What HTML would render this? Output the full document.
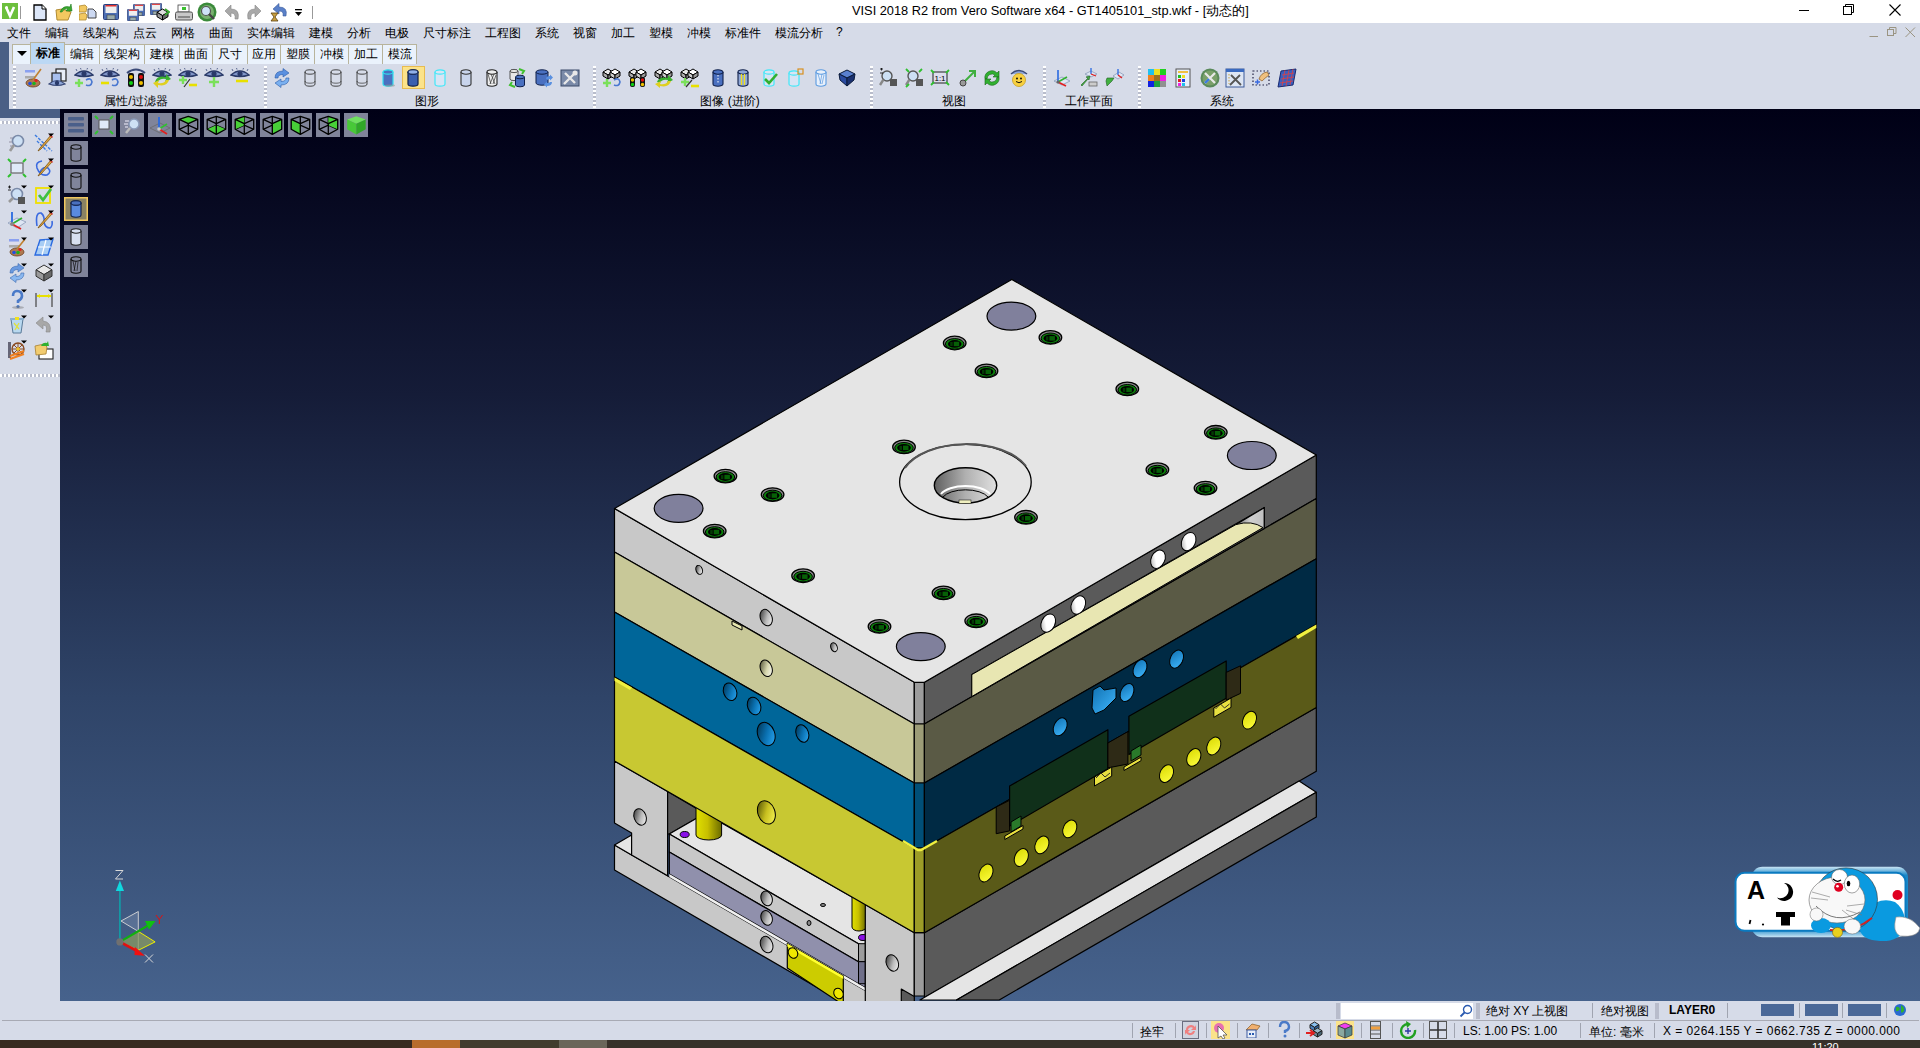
<!DOCTYPE html>
<html><head><meta charset="utf-8">
<style>
*{box-sizing:border-box}
html,body{margin:0;padding:0}
body{width:1920px;height:1048px;overflow:hidden;position:relative;background:#d6dbe8;font-family:"Liberation Sans",sans-serif;color:#000}
.a{position:absolute}
#title{left:0;top:0;width:1920px;height:23px;background:#fff}
#ttext{left:852px;top:3px;font-size:12.8px;white-space:nowrap;color:#000}
#menu{left:0;top:23px;width:1920px;height:19px}
#menu span{position:absolute;top:2px;font-size:12px;white-space:nowrap}
.tab{position:absolute;top:43px;height:21px;border:1px solid #b8b49c;border-bottom:none;background:#e6eaf2;font-size:12px;text-align:center;line-height:19px}
.glbl{position:absolute;top:93px;font-size:12px;white-space:nowrap;transform:translateX(-50%)}
.sep{position:absolute;top:66px;width:3px;height:42px;background-image:linear-gradient(#fff 50%,#b8bccb 50%);background-size:3px 4px}
#mdi1{left:0;top:42px;width:9px;height:67px;background:#4a5f85}
#mdi2{left:0;top:109px;width:60px;height:9px;background:#4a5f85}
#vp{left:60px;top:109px;width:1860px;height:892px;background:linear-gradient(#000016 0%,#151c38 32%,#2f4468 66%,#46628c 100%)}
#status{left:0;top:1001px;width:1920px;height:39px;background:#d6dbe8}
#taskbar{left:0;top:1040px;width:1920px;height:8px;background:#2b251e}
.st{position:absolute;font-size:12px;white-space:nowrap}
.vsep{position:absolute;width:1px;background:#a0a4b0}
</style></head><body>
<div id="title" class="a"></div>
<div id="ttext" class="a">VISI 2018 R2 from Vero Software x64 - GT1405101_stp.wkf - [动态的]</div>

<div id="menu" class="a">
<span style="left:7px">文件</span><span style="left:45px">编辑</span><span style="left:83px">线架构</span><span style="left:133px">点云</span><span style="left:171px">网格</span><span style="left:209px">曲面</span><span style="left:247px">实体编辑</span><span style="left:309px">建模</span><span style="left:347px">分析</span><span style="left:385px">电极</span><span style="left:423px">尺寸标注</span><span style="left:485px">工程图</span><span style="left:535px">系统</span><span style="left:573px">视窗</span><span style="left:611px">加工</span><span style="left:649px">塑模</span><span style="left:687px">冲模</span><span style="left:725px">标准件</span><span style="left:775px">模流分析</span><span style="left:836px">?</span>
</div>

<div class="tab" style="left:12px;width:19px;top:44px;height:20px;background:#eaf2fc"><span style="display:inline-block;width:0;height:0;border-left:5px solid transparent;border-right:5px solid transparent;border-top:5px solid #000;vertical-align:middle;margin-top:-2px"></span></div><div class="tab" style="left:30px;width:35px;top:42px;height:22px;background:#bcd8f4;font-weight:bold;line-height:20px">标准</div><div class="tab" style="left:64px;width:36px;top:44px;height:20px;background:#eaf2fc">编辑</div><div class="tab" style="left:99px;width:46px;top:44px;height:20px;background:#eaf2fc">线架构</div><div class="tab" style="left:144px;width:36px;top:44px;height:20px;background:#eaf2fc">建模</div><div class="tab" style="left:179px;width:34px;top:44px;height:20px;background:#eaf2fc">曲面</div><div class="tab" style="left:212px;width:36px;top:44px;height:20px;background:#eaf2fc">尺寸</div><div class="tab" style="left:247px;width:34px;top:44px;height:20px;background:#eaf2fc">应用</div><div class="tab" style="left:280px;width:35px;top:44px;height:20px;background:#eaf2fc">塑膜</div><div class="tab" style="left:314px;width:35px;top:44px;height:20px;background:#eaf2fc">冲模</div><div class="tab" style="left:348px;width:35px;top:44px;height:20px;background:#eaf2fc">加工</div><div class="tab" style="left:382px;width:35px;top:44px;height:20px;background:#eaf2fc">模流</div>
<div class="sep" style="left:13px"></div><div class="sep" style="left:264px"></div><div class="sep" style="left:593px"></div><div class="sep" style="left:870px"></div><div class="sep" style="left:1043px"></div><div class="sep" style="left:1138px"></div>
<div class="glbl" style="left:136px">属性/过滤器</div><div class="glbl" style="left:427px">图形</div><div class="glbl" style="left:730px">图像 (进阶)</div><div class="glbl" style="left:954px">视图</div><div class="glbl" style="left:1089px">工作平面</div><div class="glbl" style="left:1222px">系统</div>
<div id="mdi1" class="a"></div>
<div id="mdi2" class="a"></div>
<div id="vp" class="a"></div>
<!--MOLD--><svg class="a" style="left:0;top:0" width="1920" height="1048" viewBox="0 0 1920 1048">
<defs>
<clipPath id="vpc"><rect x="60" y="109" width="1860" height="892"/></clipPath>
<linearGradient id="hole" x1="0" y1="0" x2="1" y2="1"><stop offset="0" stop-color="#222"/><stop offset="0.55" stop-color="#bbb"/><stop offset="1" stop-color="#fff"/></linearGradient>
<linearGradient id="holew" x1="1" y1="0" x2="0" y2="1"><stop offset="0" stop-color="#fff"/><stop offset="0.6" stop-color="#fff"/><stop offset="1" stop-color="#999"/></linearGradient>
<linearGradient id="holey" x1="0" y1="0" x2="1" y2="1"><stop offset="0" stop-color="#3a3a00"/><stop offset="0.5" stop-color="#c8c020"/><stop offset="1" stop-color="#ffff60"/></linearGradient>
<linearGradient id="holeb" x1="0" y1="0" x2="1" y2="1"><stop offset="0" stop-color="#002a44"/><stop offset="0.5" stop-color="#0a70b0"/><stop offset="1" stop-color="#30b0ff"/></linearGradient>
<linearGradient id="holet" x1="0" y1="0" x2="1" y2="1"><stop offset="0" stop-color="#3a3a20"/><stop offset="0.55" stop-color="#d8d8b0"/><stop offset="1" stop-color="#fff"/></linearGradient>
<linearGradient id="byb" x1="0" y1="0" x2="1" y2="1"><stop offset="0" stop-color="#1070b0"/><stop offset="1" stop-color="#40b8ff"/></linearGradient>
<linearGradient id="yb" x1="0" y1="0" x2="1" y2="1"><stop offset="0" stop-color="#d8d800"/><stop offset="1" stop-color="#ffff40"/></linearGradient>
<linearGradient id="pin" x1="0" y1="0" x2="1" y2="0"><stop offset="0" stop-color="#e0e000"/><stop offset="0.45" stop-color="#c8c000"/><stop offset="1" stop-color="#6a6a00"/></linearGradient>
<linearGradient id="sprue" x1="0" y1="0" x2="1" y2="0"><stop offset="0" stop-color="#606060"/><stop offset="0.5" stop-color="#b0b0b0"/><stop offset="1" stop-color="#e0e0e0"/></linearGradient>
<linearGradient id="slotc" x1="0" y1="0" x2="1" y2="0"><stop offset="0" stop-color="#707070"/><stop offset="0.5" stop-color="#d0d0d0"/><stop offset="1" stop-color="#c0c0c0"/></linearGradient>
</defs>
<g clip-path="url(#vpc)">
<polygon points="614.5,845.0 914.3,1018.9 914.3,1043.9 614.5,870.0" fill="#c8c8c8" stroke="#000" stroke-width="1.2" stroke-linejoin="round"/>
<polygon points="614.5,845.0 631.6,835.1 631.6,854.9" fill="#e5e5e5" stroke="#000" stroke-width="1.2" stroke-linejoin="round"/>
<polygon points="614.5,761.0 667.6,791.4 667.6,875.8 631.6,854.9 631.6,833.0 614.5,823.0" fill="#c8c8c8" stroke="#000" stroke-width="1.2" stroke-linejoin="round"/>
<polygon points="667.6,791.4 704.9,813.4 669.3,834.0 667.6,834.0" fill="#5a5a5a" stroke="#000" stroke-width="1.2" stroke-linejoin="round"/>
<polygon points="669.3,834.0 704.9,813.4 865.3,904.6 865.3,947.7" fill="#e5e5e5" stroke="#000" stroke-width="1.2" stroke-linejoin="round"/>
<polygon points="669.3,834.0 865.3,947.7 865.3,965.7 669.3,852.0" fill="#c8c8c8" stroke="#000" stroke-width="1.2" stroke-linejoin="round"/>
<polygon points="669.3,852.0 865.3,965.7 865.3,987.7 669.3,874.0" fill="#9090ac" stroke="#000" stroke-width="1.2" stroke-linejoin="round"/>
<polygon points="669.3,874.0 865.3,987.7 865.3,990.7 669.3,877.0" fill="#f0f0f0"/>
<polygon points="858.5,943.7 865.3,943.7 865.3,961.7 858.5,961.7" fill="#9c9c9c" stroke="#000" stroke-width="1"/>
<polygon points="858.5,961.7 865.3,961.7 865.3,983.7 858.5,983.7" fill="#70708a" stroke="#000" stroke-width="1"/>
<path d="M696,806.7 L696,835 A12.8,5 0 0 0 721.6,835 L721.6,821.3 Z" fill="url(#pin)" stroke="#000" stroke-width="1"/>
<path d="M852,896.0 L852,927 A7,4 0 0 0 866,927 L866,904.0 Z" fill="url(#pin)" stroke="#000" stroke-width="1"/>
<ellipse cx="684.7" cy="834.5" rx="4.5" ry="3.0" fill="#8a10e8" stroke="#000" stroke-width="1"/>
<ellipse cx="863.0" cy="937.5" rx="4.5" ry="3.0" fill="#8a10e8" stroke="#000" stroke-width="1"/>
<polygon points="865.3,904.6 914.3,932.7 914.3,1010.0 865.3,1010.0" fill="#c8c8c8" stroke="#000" stroke-width="1.2" stroke-linejoin="round"/>
<polygon points="901.3,989.0 914.3,996.6 914.3,1010.0 901.3,1010.0" fill="#5a5a5a" stroke="#000" stroke-width="1.2" stroke-linejoin="round"/>
<polygon points="787.3,943.4 843.3,975.9 843.3,1005.0 787.3,968.0" fill="#cccc00" stroke="#000" stroke-width="1.2" stroke-linejoin="round"/>
<polygon points="787.3,943.4 843.3,975.9 843.3,979.0 787.3,946.5" fill="#ffff30"/>
<ellipse cx="793.0" cy="953.0" rx="4.5" ry="5.5" fill="#f0e800" transform="rotate(-30.0 793.0 953.0)" stroke="#000" stroke-width="1"/>
<ellipse cx="838.5" cy="993.5" rx="4.5" ry="5.5" fill="#f0e800" transform="rotate(-30.0 838.5 993.5)" stroke="#000" stroke-width="1"/>
<polygon points="924.4,932.7 1316.3,707.5 1316.3,771.2 924.4,997.4" fill="#5a5a5a" stroke="#000" stroke-width="1.2" stroke-linejoin="round"/>
<polygon points="914.3,932.7 924.4,932.7 924.4,996.0 914.3,996.0" fill="#9c9c9c" stroke="#000" stroke-width="1.2" stroke-linejoin="round"/>
<polygon points="1299.1,781.1 1316.3,792.3 956.5,1000.0 919.9,1000.0" fill="#e5e5e5" stroke="#000" stroke-width="1.2" stroke-linejoin="round"/>
<polygon points="1316.3,792.3 1316.3,817.0 999.2,1000.0 956.5,1000.0" fill="#5a5a5a" stroke="#000" stroke-width="1.2" stroke-linejoin="round"/>
<polygon points="614.5,508.4 914.3,682.3 914.3,724.0 614.5,552.0" fill="#c8c8c8" stroke="#000" stroke-width="1.2" stroke-linejoin="round"/>
<polygon points="914.3,682.3 924.4,682.3 924.4,724.0 914.3,724.0" fill="#9c9c9c" stroke="#000" stroke-width="1.2" stroke-linejoin="round"/>
<polygon points="924.4,682.3 1316.3,455.0 1316.3,498.6 924.4,724.0" fill="#5a5a5a" stroke="#000" stroke-width="1.2" stroke-linejoin="round"/>
<polygon points="614.5,552.0 914.3,724.0 914.3,783.0 614.5,612.0" fill="#c8c898" stroke="#000" stroke-width="1.2" stroke-linejoin="round"/>
<polygon points="914.3,724.0 924.4,724.0 924.4,783.0 914.3,783.0" fill="#9c9c77" stroke="#000" stroke-width="1.2" stroke-linejoin="round"/>
<polygon points="924.4,724.0 1316.3,498.6 1316.3,558.7 924.4,783.0" fill="#5a5a45" stroke="#000" stroke-width="1.2" stroke-linejoin="round"/>
<polygon points="614.5,612.0 914.3,783.0 914.3,848.0 614.5,677.0" fill="#006699" stroke="#000" stroke-width="1.2" stroke-linejoin="round"/>
<polygon points="914.3,783.0 924.4,783.0 924.4,848.0 914.3,848.0" fill="#004f78" stroke="#000" stroke-width="1.2" stroke-linejoin="round"/>
<polygon points="924.4,783.0 1316.3,558.7 1316.3,624.6 924.4,848.0" fill="#002a44" stroke="#000" stroke-width="1.2" stroke-linejoin="round"/>
<polygon points="614.5,677.0 914.3,848.0 914.3,932.7 614.5,761.0" fill="#c8c832" stroke="#000" stroke-width="1.2" stroke-linejoin="round"/>
<polygon points="914.3,848.0 924.4,848.0 924.4,932.7 914.3,932.7" fill="#9c9c27" stroke="#000" stroke-width="1.2" stroke-linejoin="round"/>
<polygon points="924.4,848.0 1316.3,624.6 1316.3,707.5 924.4,932.7" fill="#5a5a18" stroke="#000" stroke-width="1.2" stroke-linejoin="round"/>
<polyline points="903,841 918,850 921,850 937,841" fill="none" stroke="#f0f040" stroke-width="2.5"/>
<polygon points="614.5,677.5 632.0,687.5 630.0,690.0 614.5,681.0" fill="#f0f040"/>
<polygon points="1296.0,636.0 1316.3,624.6 1316.3,628.0 1298.0,639.0" fill="#f0f040"/>
<polygon points="614.5,508.4 1011.8,279.4 1316.3,455.0 924.4,682.3 914.3,682.3" fill="#e5e5e5" stroke="#000" stroke-width="1.2" stroke-linejoin="round"/>
<ellipse cx="1011.4" cy="316.1" rx="24.4" ry="14.0" fill="#80809c" stroke="#000" stroke-width="1.2" stroke-linejoin="round"/>
<ellipse cx="678.6" cy="508.3" rx="24.4" ry="14.0" fill="#80809c" stroke="#000" stroke-width="1.2" stroke-linejoin="round"/>
<ellipse cx="1251.8" cy="455.5" rx="24.4" ry="14.0" fill="#80809c" stroke="#000" stroke-width="1.2" stroke-linejoin="round"/>
<ellipse cx="920.8" cy="646.6" rx="24.4" ry="14.0" fill="#80809c" stroke="#000" stroke-width="1.2" stroke-linejoin="round"/>
<ellipse cx="954.7" cy="343.0" rx="11.3" ry="6.8" fill="#8a8a8a" stroke="#000" stroke-width="1.3"/>
<ellipse cx="954.7" cy="343.9" rx="9.3" ry="5.3" fill="#0a800a" stroke="#000" stroke-width="1"/>
<ellipse cx="954.7" cy="343.9" rx="6.8" ry="3.9" fill="#000"/>
<rect x="953.7" y="341.7" width="5.5" height="4.5" fill="#066006"/><rect x="950.2" y="342.0" width="2.5" height="4" fill="#033a03"/>
<ellipse cx="1050.4" cy="337.4" rx="11.3" ry="6.8" fill="#8a8a8a" stroke="#000" stroke-width="1.3"/>
<ellipse cx="1050.4" cy="338.3" rx="9.3" ry="5.3" fill="#0a800a" stroke="#000" stroke-width="1"/>
<ellipse cx="1050.4" cy="338.3" rx="6.8" ry="3.9" fill="#000"/>
<rect x="1049.4" y="336.1" width="5.5" height="4.5" fill="#066006"/><rect x="1045.9" y="336.4" width="2.5" height="4" fill="#033a03"/>
<ellipse cx="986.5" cy="370.9" rx="11.3" ry="6.8" fill="#8a8a8a" stroke="#000" stroke-width="1.3"/>
<ellipse cx="986.5" cy="371.8" rx="9.3" ry="5.3" fill="#0a800a" stroke="#000" stroke-width="1"/>
<ellipse cx="986.5" cy="371.8" rx="6.8" ry="3.9" fill="#000"/>
<rect x="985.5" y="369.6" width="5.5" height="4.5" fill="#066006"/><rect x="982.0" y="369.9" width="2.5" height="4" fill="#033a03"/>
<ellipse cx="1127.3" cy="388.9" rx="11.3" ry="6.8" fill="#8a8a8a" stroke="#000" stroke-width="1.3"/>
<ellipse cx="1127.3" cy="389.8" rx="9.3" ry="5.3" fill="#0a800a" stroke="#000" stroke-width="1"/>
<ellipse cx="1127.3" cy="389.8" rx="6.8" ry="3.9" fill="#000"/>
<rect x="1126.3" y="387.6" width="5.5" height="4.5" fill="#066006"/><rect x="1122.8" y="387.9" width="2.5" height="4" fill="#033a03"/>
<ellipse cx="1215.8" cy="432.3" rx="11.3" ry="6.8" fill="#8a8a8a" stroke="#000" stroke-width="1.3"/>
<ellipse cx="1215.8" cy="433.2" rx="9.3" ry="5.3" fill="#0a800a" stroke="#000" stroke-width="1"/>
<ellipse cx="1215.8" cy="433.2" rx="6.8" ry="3.9" fill="#000"/>
<rect x="1214.8" y="431.0" width="5.5" height="4.5" fill="#066006"/><rect x="1211.3" y="431.3" width="2.5" height="4" fill="#033a03"/>
<ellipse cx="1157.4" cy="469.7" rx="11.3" ry="6.8" fill="#8a8a8a" stroke="#000" stroke-width="1.3"/>
<ellipse cx="1157.4" cy="470.6" rx="9.3" ry="5.3" fill="#0a800a" stroke="#000" stroke-width="1"/>
<ellipse cx="1157.4" cy="470.6" rx="6.8" ry="3.9" fill="#000"/>
<rect x="1156.4" y="468.4" width="5.5" height="4.5" fill="#066006"/><rect x="1152.9" y="468.7" width="2.5" height="4" fill="#033a03"/>
<ellipse cx="1205.5" cy="488.1" rx="11.3" ry="6.8" fill="#8a8a8a" stroke="#000" stroke-width="1.3"/>
<ellipse cx="1205.5" cy="489.0" rx="9.3" ry="5.3" fill="#0a800a" stroke="#000" stroke-width="1"/>
<ellipse cx="1205.5" cy="489.0" rx="6.8" ry="3.9" fill="#000"/>
<rect x="1204.5" y="486.8" width="5.5" height="4.5" fill="#066006"/><rect x="1201.0" y="487.1" width="2.5" height="4" fill="#033a03"/>
<ellipse cx="904.0" cy="446.9" rx="11.3" ry="6.8" fill="#8a8a8a" stroke="#000" stroke-width="1.3"/>
<ellipse cx="904.0" cy="447.8" rx="9.3" ry="5.3" fill="#0a800a" stroke="#000" stroke-width="1"/>
<ellipse cx="904.0" cy="447.8" rx="6.8" ry="3.9" fill="#000"/>
<rect x="903.0" y="445.6" width="5.5" height="4.5" fill="#066006"/><rect x="899.5" y="445.9" width="2.5" height="4" fill="#033a03"/>
<ellipse cx="725.4" cy="476.1" rx="11.3" ry="6.8" fill="#8a8a8a" stroke="#000" stroke-width="1.3"/>
<ellipse cx="725.4" cy="477.0" rx="9.3" ry="5.3" fill="#0a800a" stroke="#000" stroke-width="1"/>
<ellipse cx="725.4" cy="477.0" rx="6.8" ry="3.9" fill="#000"/>
<rect x="724.4" y="474.8" width="5.5" height="4.5" fill="#066006"/><rect x="720.9" y="475.1" width="2.5" height="4" fill="#033a03"/>
<ellipse cx="772.6" cy="494.6" rx="11.3" ry="6.8" fill="#8a8a8a" stroke="#000" stroke-width="1.3"/>
<ellipse cx="772.6" cy="495.5" rx="9.3" ry="5.3" fill="#0a800a" stroke="#000" stroke-width="1"/>
<ellipse cx="772.6" cy="495.5" rx="6.8" ry="3.9" fill="#000"/>
<rect x="771.6" y="493.3" width="5.5" height="4.5" fill="#066006"/><rect x="768.1" y="493.6" width="2.5" height="4" fill="#033a03"/>
<ellipse cx="714.7" cy="531.1" rx="11.3" ry="6.8" fill="#8a8a8a" stroke="#000" stroke-width="1.3"/>
<ellipse cx="714.7" cy="532.0" rx="9.3" ry="5.3" fill="#0a800a" stroke="#000" stroke-width="1"/>
<ellipse cx="714.7" cy="532.0" rx="6.8" ry="3.9" fill="#000"/>
<rect x="713.7" y="529.8" width="5.5" height="4.5" fill="#066006"/><rect x="710.2" y="530.1" width="2.5" height="4" fill="#033a03"/>
<ellipse cx="1026.0" cy="517.3" rx="11.3" ry="6.8" fill="#8a8a8a" stroke="#000" stroke-width="1.3"/>
<ellipse cx="1026.0" cy="518.2" rx="9.3" ry="5.3" fill="#0a800a" stroke="#000" stroke-width="1"/>
<ellipse cx="1026.0" cy="518.2" rx="6.8" ry="3.9" fill="#000"/>
<rect x="1025.0" y="516.0" width="5.5" height="4.5" fill="#066006"/><rect x="1021.5" y="516.3" width="2.5" height="4" fill="#033a03"/>
<ellipse cx="803.1" cy="575.7" rx="11.3" ry="6.8" fill="#8a8a8a" stroke="#000" stroke-width="1.3"/>
<ellipse cx="803.1" cy="576.6" rx="9.3" ry="5.3" fill="#0a800a" stroke="#000" stroke-width="1"/>
<ellipse cx="803.1" cy="576.6" rx="6.8" ry="3.9" fill="#000"/>
<rect x="802.1" y="574.4" width="5.5" height="4.5" fill="#066006"/><rect x="798.6" y="574.7" width="2.5" height="4" fill="#033a03"/>
<ellipse cx="943.5" cy="592.9" rx="11.3" ry="6.8" fill="#8a8a8a" stroke="#000" stroke-width="1.3"/>
<ellipse cx="943.5" cy="593.8" rx="9.3" ry="5.3" fill="#0a800a" stroke="#000" stroke-width="1"/>
<ellipse cx="943.5" cy="593.8" rx="6.8" ry="3.9" fill="#000"/>
<rect x="942.5" y="591.6" width="5.5" height="4.5" fill="#066006"/><rect x="939.0" y="591.9" width="2.5" height="4" fill="#033a03"/>
<ellipse cx="879.5" cy="626.4" rx="11.3" ry="6.8" fill="#8a8a8a" stroke="#000" stroke-width="1.3"/>
<ellipse cx="879.5" cy="627.3" rx="9.3" ry="5.3" fill="#0a800a" stroke="#000" stroke-width="1"/>
<ellipse cx="879.5" cy="627.3" rx="6.8" ry="3.9" fill="#000"/>
<rect x="878.5" y="625.1" width="5.5" height="4.5" fill="#066006"/><rect x="875.0" y="625.4" width="2.5" height="4" fill="#033a03"/>
<ellipse cx="976.2" cy="620.8" rx="11.3" ry="6.8" fill="#8a8a8a" stroke="#000" stroke-width="1.3"/>
<ellipse cx="976.2" cy="621.7" rx="9.3" ry="5.3" fill="#0a800a" stroke="#000" stroke-width="1"/>
<ellipse cx="976.2" cy="621.7" rx="6.8" ry="3.9" fill="#000"/>
<rect x="975.2" y="619.5" width="5.5" height="4.5" fill="#066006"/><rect x="971.7" y="619.8" width="2.5" height="4" fill="#033a03"/>
<ellipse cx="965.4" cy="482.0" rx="65.8" ry="37.7" fill="none" stroke="#000" stroke-width="1.3"/>
<path d="M905,468 A65,36 0 0 1 1026,466" fill="none" stroke="#555" stroke-width="2"/>
<ellipse cx="965.5" cy="485.4" rx="31.2" ry="17.7" fill="url(#sprue)" stroke="#000" stroke-width="1.4"/>
<path d="M941,494 A26,12 0 0 1 990,494" fill="none" stroke="#fff" stroke-width="2"/>
<path d="M943,497 A24,11 0 0 1 988,497" fill="none" stroke="#000" stroke-width="1"/>
<rect x="959" y="500" width="12" height="3.5" fill="#f0f0c0" stroke="#000" stroke-width="0.5"/>
<polygon points="971.8,674.6 1264.4,507.6 1264.4,528.6 971.8,696.5" fill="#5a5a5a" stroke="#000" stroke-width="1.2" stroke-linejoin="round"/>
<polygon points="1236,524.5 1264.2,507.8 1264.2,527.5" fill="url(#slotc)"/>
<path d="M971.8,674.6 L1236,524.5 Q1252,520 1263,527.6 L971.8,696.5 Z" fill="#e8e6b2" stroke="#000" stroke-width="1"/>
<path d="M1236,524.5 L1264.2,507.8 L1264.2,527.5" fill="none" stroke="#000" stroke-width="1.2"/>
<ellipse cx="1048.2" cy="623.1" rx="6.8" ry="9.6" fill="url(#holew)" transform="rotate(25.0 1048.2 623.1)" stroke="#000" stroke-width="1"/>
<ellipse cx="1078.3" cy="605.0" rx="6.8" ry="9.6" fill="url(#holew)" transform="rotate(25.0 1078.3 605.0)" stroke="#000" stroke-width="1"/>
<ellipse cx="1158.0" cy="559.2" rx="6.8" ry="9.6" fill="url(#holew)" transform="rotate(25.0 1158.0 559.2)" stroke="#000" stroke-width="1"/>
<ellipse cx="1188.6" cy="541.6" rx="6.8" ry="9.6" fill="url(#holew)" transform="rotate(25.0 1188.6 541.6)" stroke="#000" stroke-width="1"/>
<polygon points="996.2,807.0 1009.6,800.3 1009.6,830.9 996.2,833.7" fill="#2e2a16" stroke="#000" stroke-width="1"/>
<polygon points="1009.6,786.0 1107.9,729.7 1107.9,768.8 1009.6,826.1" fill="#10301a" stroke="#000" stroke-width="1.2" stroke-linejoin="round"/>
<polygon points="1107.9,743.0 1127.9,731.6 1127.9,764.0 1107.9,767.9" fill="#2e2a16" stroke="#000" stroke-width="1"/>
<polygon points="1128.9,716.3 1226.2,661.0 1226.2,698.2 1128.9,754.5" fill="#10301a" stroke="#000" stroke-width="1.2" stroke-linejoin="round"/>
<polygon points="1226.2,672.4 1240.5,665.8 1240.5,693.4 1226.2,700.1" fill="#2e2a16" stroke="#000" stroke-width="1"/>
<polygon points="1011.0,822.0 1021.0,816.0 1021.0,826.0 1011.0,832.0" fill="#2a7a2a" stroke="#000" stroke-width="1"/>
<polygon points="1131.0,751.0 1141.0,745.0 1141.0,755.0 1131.0,761.0" fill="#2a7a2a" stroke="#000" stroke-width="1"/>
<polygon points="1094.5,777.0 1111.7,767.1 1111.7,776.1 1094.5,786.0" fill="#e8e040" stroke="#000" stroke-width="1"/>
<polygon points="1124.0,767.0 1141.0,757.2 1141.0,760.7 1124.0,770.5" fill="#e8e040" stroke="#000" stroke-width="1"/>
<polygon points="1213.8,708.0 1231.0,698.1 1231.0,707.4 1213.8,717.3" fill="#e8e040" stroke="#000" stroke-width="1"/>
<polygon points="1004.8,836.0 1023.0,825.5 1023.0,829.0 1004.8,839.5" fill="#e8e040" stroke="#000" stroke-width="1"/>
<path d="M1096.0,778.0 l5,-5 l4,4 l5,-4" fill="none" stroke="#222" stroke-width="0.9"/>
<path d="M1215.5,709.0 l5,-5 l4,4 l5,-4" fill="none" stroke="#222" stroke-width="0.9"/>
<ellipse cx="1060.2" cy="726.8" rx="6.3" ry="9.5" fill="url(#byb)" transform="rotate(25.0 1060.2 726.8)" stroke="#000" stroke-width="1"/>
<ellipse cx="1140.0" cy="668.6" rx="6.3" ry="9.5" fill="url(#byb)" transform="rotate(25.0 1140.0 668.6)" stroke="#000" stroke-width="1"/>
<ellipse cx="1176.6" cy="659.1" rx="6.3" ry="9.5" fill="url(#byb)" transform="rotate(25.0 1176.6 659.1)" stroke="#000" stroke-width="1"/>
<ellipse cx="1127.0" cy="692.5" rx="6.3" ry="9.5" fill="url(#byb)" transform="rotate(25.0 1127.0 692.5)" stroke="#000" stroke-width="1"/>
<path d="M1093,690 L1100,686 L1104,690 L1116,688 L1116,698 L1104,710 L1095,714 L1092,708 Z" fill="url(#byb)" stroke="#000" stroke-width="1"/>
<ellipse cx="986.0" cy="873.0" rx="6.5" ry="9.3" fill="url(#yb)" transform="rotate(25.0 986.0 873.0)" stroke="#000" stroke-width="1"/>
<ellipse cx="1021.3" cy="857.5" rx="6.5" ry="9.3" fill="url(#yb)" transform="rotate(25.0 1021.3 857.5)" stroke="#000" stroke-width="1"/>
<ellipse cx="1041.9" cy="844.9" rx="6.5" ry="9.3" fill="url(#yb)" transform="rotate(25.0 1041.9 844.9)" stroke="#000" stroke-width="1"/>
<ellipse cx="1069.8" cy="828.9" rx="6.5" ry="9.3" fill="url(#yb)" transform="rotate(25.0 1069.8 828.9)" stroke="#000" stroke-width="1"/>
<ellipse cx="1166.5" cy="773.6" rx="6.5" ry="9.3" fill="url(#yb)" transform="rotate(25.0 1166.5 773.6)" stroke="#000" stroke-width="1"/>
<ellipse cx="1193.8" cy="757.4" rx="6.5" ry="9.3" fill="url(#yb)" transform="rotate(25.0 1193.8 757.4)" stroke="#000" stroke-width="1"/>
<ellipse cx="1213.8" cy="746.0" rx="6.5" ry="9.3" fill="url(#yb)" transform="rotate(25.0 1213.8 746.0)" stroke="#000" stroke-width="1"/>
<ellipse cx="1249.5" cy="720.2" rx="6.5" ry="9.3" fill="url(#yb)" transform="rotate(25.0 1249.5 720.2)" stroke="#000" stroke-width="1"/>
<ellipse cx="699.2" cy="569.9" rx="3.2" ry="4.6" fill="url(#hole)" transform="rotate(-20.0 699.2 569.9)" stroke="#000" stroke-width="1"/>
<ellipse cx="766.2" cy="617.6" rx="5.8" ry="8.5" fill="url(#hole)" transform="rotate(-20.0 766.2 617.6)" stroke="#000" stroke-width="1"/>
<ellipse cx="834.0" cy="647.2" rx="3.2" ry="4.6" fill="url(#hole)" transform="rotate(-20.0 834.0 647.2)" stroke="#000" stroke-width="1"/>
<ellipse cx="766.2" cy="668.3" rx="5.8" ry="8.5" fill="url(#holet)" transform="rotate(-20.0 766.2 668.3)" stroke="#000" stroke-width="1"/>
<ellipse cx="730.1" cy="691.8" rx="6.5" ry="9.0" fill="url(#holeb)" transform="rotate(-20.0 730.1 691.8)" stroke="#000" stroke-width="1"/>
<ellipse cx="754.1" cy="706.0" rx="6.5" ry="9.0" fill="url(#holeb)" transform="rotate(-20.0 754.1 706.0)" stroke="#000" stroke-width="1"/>
<ellipse cx="766.2" cy="734.0" rx="8.5" ry="12.0" fill="url(#holeb)" transform="rotate(-20.0 766.2 734.0)" stroke="#000" stroke-width="1"/>
<ellipse cx="802.3" cy="733.5" rx="6.2" ry="9.0" fill="url(#holeb)" transform="rotate(-20.0 802.3 733.5)" stroke="#000" stroke-width="1"/>
<ellipse cx="766.4" cy="812.4" rx="8.5" ry="12.0" fill="url(#holey)" transform="rotate(-20.0 766.4 812.4)" stroke="#000" stroke-width="1"/>
<ellipse cx="640.1" cy="816.9" rx="6.0" ry="8.5" fill="url(#hole)" transform="rotate(-20.0 640.1 816.9)" stroke="#000" stroke-width="1"/>
<ellipse cx="766.6" cy="898.4" rx="5.5" ry="7.5" fill="url(#hole)" transform="rotate(-20.0 766.6 898.4)" stroke="#000" stroke-width="1"/>
<ellipse cx="766.6" cy="917.9" rx="5.5" ry="7.5" fill="url(#hole)" transform="rotate(-20.0 766.6 917.9)" stroke="#000" stroke-width="1"/>
<ellipse cx="766.6" cy="944.6" rx="6.0" ry="8.5" fill="url(#hole)" transform="rotate(-20.0 766.6 944.6)" stroke="#000" stroke-width="1"/>
<ellipse cx="892.3" cy="962.9" rx="6.0" ry="8.5" fill="url(#hole)" transform="rotate(-20.0 892.3 962.9)" stroke="#000" stroke-width="1"/>
<polygon points="732.0,621.0 742.0,626.0 742.0,630.0 732.0,625.0" fill="#e8e8b0" stroke="#000" stroke-width="1"/>
<ellipse cx="823.0" cy="905.0" rx="2.5" ry="1.5" fill="#888" stroke="#000" stroke-width="1"/>
<ellipse cx="809.0" cy="923.0" rx="2.0" ry="2.5" fill="#888" stroke="#000" stroke-width="1"/>
</g></svg><!--/MOLD-->
<div id="status" class="a"></div>
<div id="taskbar" class="a"></div>
<!--STATUS--><div class="a" style="left:2px;top:1020px;width:1917px;height:1px;background:#a8aab4"></div>
<div class="a" style="left:1336px;top:1003px;width:4px;height:16px;background-image:radial-gradient(#fff 35%,#b8bccb 40%);background-size:2px 2px"></div>
<div class="a" style="left:1341px;top:1003px;width:132px;height:16px;background:#fff"></div>
<svg class="a" style="left:1459px;top:1004px" width="14" height="14" viewBox="0 0 14 14"><circle cx="8.5" cy="5.5" r="4" fill="none" stroke="#2a5ab0" stroke-width="1.4"/><path d="M6,8 L1.5,12.5" stroke="#2a5ab0" stroke-width="1.8"/></svg>
<div class="a" style="left:1476px;top:1003px;width:4px;height:16px;background-image:radial-gradient(#fff 35%,#b8bccb 40%);background-size:2px 2px"></div>
<div class="st" style="left:1486px;top:1003px">绝对 XY 上视图</div>
<div class="vsep" style="left:1592px;top:1003px;height:15px"></div>
<div class="st" style="left:1601px;top:1003px">绝对视图</div>
<div class="a" style="left:1655px;top:1003px;width:4px;height:16px;background-image:radial-gradient(#fff 35%,#b8bccb 40%);background-size:2px 2px"></div>
<div class="st" style="left:1669px;top:1003px;font-weight:bold">LAYER0</div>
<div class="vsep" style="left:1727px;top:1003px;height:15px"></div>
<div class="a" style="left:1761px;top:1004px;width:33px;height:12px;background:#4a6898"></div>
<div class="a" style="left:1805px;top:1004px;width:33px;height:12px;background:#4a6898"></div>
<div class="a" style="left:1848px;top:1004px;width:33px;height:12px;background:#4a6898"></div>
<div class="vsep" style="left:1799px;top:1003px;height:15px"></div><div class="vsep" style="left:1842px;top:1003px;height:15px"></div><div class="vsep" style="left:1886px;top:1003px;height:15px"></div>
<svg class="a" style="left:1893px;top:1003px" width="14" height="14" viewBox="0 0 14 14"><circle cx="7" cy="7" r="6" fill="#2a6ad0"/><path d="M3,4 Q6,3 7,6 Q5,9 3,8 Z M8,2 Q12,4 11,8 Q9,11 8,9 Z" fill="#30b030"/></svg>
<div class="vsep" style="left:1132px;top:1023px;height:15px"></div>
<div class="vsep" style="left:1175px;top:1023px;height:15px"></div>
<div class="vsep" style="left:1206px;top:1023px;height:15px"></div>
<div class="vsep" style="left:1237px;top:1023px;height:15px"></div>
<div class="vsep" style="left:1268px;top:1023px;height:15px"></div>
<div class="vsep" style="left:1299px;top:1023px;height:15px"></div>
<div class="vsep" style="left:1330px;top:1023px;height:15px"></div>
<div class="vsep" style="left:1361px;top:1023px;height:15px"></div>
<div class="vsep" style="left:1392px;top:1023px;height:15px"></div>
<div class="vsep" style="left:1423px;top:1023px;height:15px"></div>
<div class="vsep" style="left:1454px;top:1023px;height:15px"></div>
<div class="vsep" style="left:1580px;top:1023px;height:15px"></div>
<div class="vsep" style="left:1654px;top:1023px;height:15px"></div>
<div class="st" style="left:1140px;top:1024px">拴牢</div>
<svg class="a" style="left:1182px;top:1021px" width="17" height="18" viewBox="0 0 17 18"><rect x="0.5" y="0.5" width="16" height="17" fill="#d0d4e0" stroke="#6a6e80"/><path d="M4,9 A5,5 0 0 1 13,6 L14,4 L14,9 L9,9 L11,7 A3,3 0 0 0 6,9 Z M13,10 A5,5 0 0 1 4,12 L3,14 L3,9 L8,9 L6,11 A3,3 0 0 0 11,10 Z" fill="#f08080"/></svg>
<svg class="a" style="left:1211px;top:1021px" width="19" height="18" viewBox="0 0 19 18"><rect width="19" height="18" fill="#fbe38a"/><circle cx="8" cy="7" r="5" fill="#e040c0" opacity="0.7"/><path d="M7,5 L16,14 L12,14 L14,17 L12,18 L10,15 L7,17 Z" fill="#fff" stroke="#555" stroke-width="0.8"/></svg>
<svg class="a" style="left:1245px;top:1022px" width="16" height="16" viewBox="0 0 16 16"><path d="M1,8 L7,2 L15,4 L12,8 Z" fill="#f0b070" stroke="#8a5a20" stroke-width="0.7"/><rect x="2" y="8" width="9" height="8" fill="#e8eef8" stroke="#3a5aa0" stroke-width="1"/><rect x="4" y="11" width="2" height="2" fill="#2a5ab0"/><rect x="7" y="11" width="2" height="2" fill="#2a5ab0"/></svg>
<svg class="a" style="left:1276px;top:1021px" width="16" height="18" viewBox="0 0 16 18"><path d="M4,6 Q4,1 8,1 Q13,1 13,6 Q13,9 9,10 L9,12" fill="none" stroke="#4a7ac8" stroke-width="2.4"/><circle cx="9" cy="15" r="1.5" fill="#4a7ac8"/></svg>
<svg class="a" style="left:1305px;top:1021px" width="18" height="18" viewBox="0 0 18 18"><polygon points="5,3.6999999999999997 9.5,1 14,3.6999999999999997 9.5,6.3999999999999995" fill="#8ac0f0" stroke="#222" stroke-width="1"/><polygon points="5,3.6999999999999997 9.5,6.3999999999999995 9.5,10 5,7.300000000000001" fill="#4a80c0" stroke="#222" stroke-width="1"/><polygon points="9.5,6.3999999999999995 14,3.6999999999999997 14,7.300000000000001 9.5,10" fill="#2a60a0" stroke="#222" stroke-width="1"/><polygon points="8,9.7 12.5,7 17,9.7 12.5,12.399999999999999" fill="#9ab8c8" stroke="#222" stroke-width="1"/><polygon points="8,9.7 12.5,12.399999999999999 12.5,16 8,13.3" fill="#6a8898" stroke="#222" stroke-width="1"/><polygon points="12.5,12.399999999999999 17,9.7 17,13.3 12.5,16" fill="#4a6878" stroke="#222" stroke-width="1"/><path d="M1,12 L9,12 M5,9 L9,12 L5,15" fill="none" stroke="#e02020" stroke-width="1.8"/></svg>
<svg class="a" style="left:1336px;top:1021px" width="18" height="18" viewBox="0 0 18 18"><rect width="18" height="18" fill="#fbe38a"/><polygon points="2,5 9,2 16,5 9,8" fill="#f040f0" stroke="#333" stroke-width="0.7"/><polygon points="2,5 9,8 9,17 2,14" fill="#8aa8a0" stroke="#333" stroke-width="0.7"/><polygon points="9,8 16,5 16,14 9,17" fill="#5a8a90" stroke="#333" stroke-width="0.7"/></svg>
<svg class="a" style="left:1370px;top:1021px" width="11" height="18" viewBox="0 0 11 18"><rect x="0.5" y="0.5" width="10" height="17" fill="none" stroke="#555"/><path d="M0.5,5 h10 M0.5,9 h10 M0.5,13 h10" stroke="#555"/><rect x="1" y="5.5" width="9" height="3" fill="#f0a040"/></svg>
<svg class="a" style="left:1399px;top:1021px" width="18" height="18" viewBox="0 0 18 18"><path d="M9,3 A7,7 0 1 0 16,9" fill="none" stroke="#20a020" stroke-width="2.4"/><path d="M7,0 L12,3 L8,7 Z" fill="#20a020"/><path d="M6,10 h6 M9,7 v6" stroke="#2a3aa0" stroke-width="1.4"/></svg>
<svg class="a" style="left:1429px;top:1021px" width="18" height="18" viewBox="0 0 18 18"><rect x="0.5" y="0.5" width="17" height="17" fill="none" stroke="#555"/><path d="M9,1 v16 M1,9 h16" stroke="#333" stroke-width="1.6"/></svg>
<div class="st" style="left:1463px;top:1024px">LS: 1.00 PS: 1.00</div>
<div class="st" style="left:1589px;top:1024px">单位: 毫米</div>
<div class="st" style="left:1663px;top:1024px;letter-spacing:0.44px">X = 0264.155 Y = 0662.735 Z = 0000.000</div>
<div class="a" style="left:0;top:1040px;width:412px;height:8px;background:#382a20"></div>
<div class="a" style="left:412px;top:1040px;width:48px;height:8px;background:#b86c2c"></div>
<div class="a" style="left:460px;top:1040px;width:99px;height:8px;background:#423c2e"></div>
<div class="a" style="left:559px;top:1040px;width:48px;height:8px;background:#6a665a"></div>
<div class="a" style="left:607px;top:1040px;width:1313px;height:8px;background:#37312a"></div>
<div class="a" style="left:1812px;top:1041px;font-size:11px;color:#fff;white-space:nowrap;line-height:12px">11:20</div><!--/STATUS-->
<!--ICONS--><svg class="a" style="left:2px;top:3px" width="16" height="16" viewBox="0 0 16 16"><rect width="16" height="16" fill="#6cbf3c"/><path d="M4,4 L8,13 L12,4" fill="none" stroke="#fff" stroke-width="2.6"/><circle cx="4.5" cy="4.5" r="1.5" fill="#fff"/></svg>
<div class="a" style="left:20px;top:6px;width:1px;height:13px;background:#999"></div>
<svg class="a" style="left:33px;top:4px" width="14" height="17" viewBox="0 0 14 17"><path d="M1,1 L9,1 L13,5 L13,16 L1,16 Z" fill="#dce6f8" stroke="#000" stroke-width="1.3"/><path d="M9,1 L9,5 L13,5" fill="#fff" stroke="#000"/></svg>
<svg class="a" style="left:55px;top:3px" width="18" height="18" viewBox="0 0 18 18"><path d="M1,7 L7,6 L16,9 L13,17 L2,17 Z" fill="#f2c860" stroke="#b08a30"/><path d="M5,9 Q8,2 15,4 L16,1 L17,8 L11,8 L13,6 Q9,5 7,9 Z" fill="#3aa830" stroke="#1f7a1f" stroke-width="0.6"/></svg>
<svg class="a" style="left:79px;top:3px" width="18" height="18" viewBox="0 0 18 18"><path d="M0,3 L6,2 L8,4 L7,9 L0,9 Z" fill="#f2c860" stroke="#b08a30" stroke-width="0.8"/><path d="M0,11 L6,10 L8,12 L7,17 L0,17 Z" fill="#f2c860" stroke="#b08a30" stroke-width="0.8"/><path d="M9,6 L14,6 L17,9 L17,15 L9,15 Z" fill="#cdd9f2" stroke="#333" stroke-width="0.9"/></svg>
<svg class="a" style="left:103px;top:4px" width="16" height="16" viewBox="0 0 16 16"><rect x="0.5" y="0.5" width="15" height="15" rx="1" fill="#4d6fb5" stroke="#2a3f7a"/><rect x="2.5" y="1" width="11" height="8" fill="#eee"/><rect x="2.5" y="1" width="11" height="1.5" fill="#e03030"/><rect x="4" y="11" width="8" height="4.5" fill="#9aa" stroke="#333" stroke-width="0.5"/></svg>
<svg class="a" style="left:133px;top:4px" width="12" height="12" viewBox="0 0 16 16"><rect x="0.5" y="0.5" width="15" height="15" rx="1" fill="#4d6fb5" stroke="#2a3f7a"/><rect x="2.5" y="1" width="11" height="8" fill="#eee"/><rect x="2.5" y="1" width="11" height="1.5" fill="#e03030"/><rect x="4" y="11" width="8" height="4.5" fill="#9aa" stroke="#333" stroke-width="0.5"/></svg>
<svg class="a" style="left:127px;top:9px" width="12" height="12" viewBox="0 0 16 16"><rect x="0.5" y="0.5" width="15" height="15" rx="1" fill="#4d6fb5" stroke="#2a3f7a"/><rect x="2.5" y="1" width="11" height="8" fill="#eee"/><rect x="2.5" y="1" width="11" height="1.5" fill="#e03030"/><rect x="4" y="11" width="8" height="4.5" fill="#9aa" stroke="#333" stroke-width="0.5"/></svg>
<svg class="a" style="left:150px;top:3px" width="12" height="12" viewBox="0 0 16 16"><rect x="0.5" y="0.5" width="15" height="15" rx="1" fill="#4d6fb5" stroke="#2a3f7a"/><rect x="2.5" y="1" width="11" height="8" fill="#eee"/><rect x="2.5" y="1" width="11" height="1.5" fill="#e03030"/><rect x="4" y="11" width="8" height="4.5" fill="#9aa" stroke="#333" stroke-width="0.5"/></svg>
<svg class="a" style="left:156px;top:8px" width="14" height="14" viewBox="0 0 14 14"><polygon points="1,4.3 6.5,1 12,4.3 6.5,7.6" fill="#ddd" stroke="#000" stroke-width="1"/><polygon points="1,4.3 6.5,7.6 6.5,12 1,8.7" fill="#999" stroke="#000" stroke-width="1"/><polygon points="6.5,7.6 12,4.3 12,8.7 6.5,12" fill="#666" stroke="#000" stroke-width="1"/><path d="M9,1 L13,4 L9,7" fill="none" stroke="#3aa830" stroke-width="2"/></svg>
<svg class="a" style="left:175px;top:4px" width="18" height="17" viewBox="0 0 18 17"><rect x="3" y="1" width="11" height="7" fill="#fff" stroke="#444" stroke-width="0.8"/><rect x="7" y="3" width="4" height="3" fill="#3ac030"/><rect x="0.5" y="8" width="17" height="8" rx="1.5" fill="#c8c8c8" stroke="#555"/><rect x="3" y="12" width="12" height="2" fill="#888"/></svg>
<svg class="a" style="left:197px;top:2px" width="20" height="20" viewBox="0 0 20 20"><circle cx="10" cy="10" r="9.5" fill="#3a8a3a"/><circle cx="10" cy="10" r="7" fill="#7ab070"/><circle cx="9" cy="9" r="4.5" fill="#cfe3f8" stroke="#555" stroke-width="1.2"/><path d="M12,12 L17,17" stroke="#444" stroke-width="2.4"/></svg>
<svg class="a" style="left:224px;top:4px" width="16" height="17" viewBox="0 0 16 17"><path d="M14,15 Q16,5 7,5 L7,1 L1,7 L7,13 L7,9 Q12,9 11,15 Z" fill="#a8a8a8" stroke="#888" stroke-width="0.6"/></svg>
<svg class="a" style="left:246px;top:4px" width="16" height="17" viewBox="0 0 16 17"><path d="M2,15 Q0,5 9,5 L9,1 L15,7 L9,13 L9,9 Q4,9 5,15 Z" fill="#a8a8a8" stroke="#888" stroke-width="0.6"/></svg>
<svg class="a" style="left:269px;top:3px" width="19" height="19" viewBox="0 0 19 19"><path d="M17,13 Q19,4 10,4 L10,0.5 L4,6 L10,11 L10,8 Q15,8 14,13 Z" fill="#5a80c8" stroke="#3a5a9a" stroke-width="0.6"/><path d="M2,10 L9,10 L6,14 L9,18 L2,18 L5,14 Z" fill="#c8a040" stroke="#5a4010" stroke-width="0.8"/></svg>
<svg class="a" style="left:294px;top:9px" width="9" height="8" viewBox="0 0 9 8"><rect x="1" y="0" width="7" height="1.3" fill="#000"/><path d="M1,3 L8,3 L4.5,7 Z" fill="#000"/></svg>
<div class="a" style="left:312px;top:6px;width:1px;height:13px;background:#999"></div>
<svg class="a" style="left:1798px;top:4px" width="12" height="12" viewBox="0 0 12 12"><path d="M1,6.5 L11,6.5" stroke="#000" stroke-width="1"/></svg>
<svg class="a" style="left:1843px;top:4px" width="12" height="12" viewBox="0 0 12 12"><rect x="0.5" y="2.5" width="8" height="8" fill="none" stroke="#000"/><path d="M2.5,2.5 L2.5,0.5 L10.5,0.5 L10.5,8.5 L8.5,8.5" fill="none" stroke="#000"/></svg>
<svg class="a" style="left:1889px;top:4px" width="12" height="12" viewBox="0 0 12 12"><path d="M0.5,0.5 L11.5,11.5 M11.5,0.5 L0.5,11.5" stroke="#000" stroke-width="1.1"/></svg>
<svg class="a" style="left:1869px;top:28px" width="10" height="10" viewBox="0 0 10 10"><path d="M0.5,8.5 L9,8.5" stroke="#9a9482" stroke-width="1"/></svg>
<svg class="a" style="left:1887px;top:27px" width="10" height="10" viewBox="0 0 10 10"><rect x="0.5" y="2.5" width="6" height="6" fill="none" stroke="#9a9482"/><path d="M2.5,2.5 L2.5,0.5 L9,0.5 L9,6.5 L6.5,6.5" fill="none" stroke="#9a9482"/></svg>
<svg class="a" style="left:1905px;top:27px" width="11" height="11" viewBox="0 0 11 11"><path d="M0.5,0.5 L10,10 M10,0.5 L0.5,10" stroke="#9a9482" stroke-width="1"/></svg><svg class="a" style="left:23px;top:68px" width="20" height="20" viewBox="0 0 20 20"><rect x="2" y="2" width="10" height="2.5" fill="#8aa0f0"/><rect x="2" y="5" width="10" height="2.5" fill="#dde"/><rect x="2" y="8" width="10" height="2.5" fill="#aaa"/><ellipse cx="10" cy="15" rx="7" ry="4" fill="#b07850" stroke="#6a4020" stroke-width="0.8"/><circle cx="7" cy="15.5" r="1.8" fill="#2050e0"/><circle cx="11" cy="15.5" r="1.8" fill="#20b020"/><circle cx="13" cy="12.5" r="1.6" fill="#e02020"/><path d="M18,1 L10,12" stroke="#c08030" stroke-width="1.6"/></svg>
<svg class="a" style="left:48px;top:68px" width="20" height="20" viewBox="0 0 20 20"><rect x="8" y="1" width="10" height="12" fill="#e8eef8" stroke="#222" stroke-width="1.2"/><rect x="4" y="5" width="9" height="10" fill="#a8c0f0" stroke="#222" stroke-width="1.2"/><path d="M1,16 Q9,9 17,16 Q9,19 1,16 Z" fill="#8fa6d8" stroke="#3a4a78" stroke-width="1.2"/><circle cx="9" cy="15" r="2.2" fill="#2a3a6a"/></svg>
<svg class="a" style="left:74px;top:68px" width="20" height="20" viewBox="0 0 20 20"><path d="M1,7 Q10,-1 19,7 Q10,10 1,7 Z" fill="#8096c8" stroke="#2a3a68" stroke-width="1.5"/><circle cx="10" cy="5.8" r="2.6" fill="#2a3a6a"/><path d="M3,3 L2,1 M7,1.5 L6.5,0 M13,1.5 L13.5,0 M17,3 L18,1" stroke="#3a4a78" stroke-width="0.8"/><path d="M1,15 h8 M5,11 v8" stroke="#7ae05a" stroke-width="2.4"/><path d="M12,12 Q17,9 18,14 Q17,19 12,17" fill="none" stroke="#4a78d0" stroke-width="1.6"/></svg>
<svg class="a" style="left:100px;top:68px" width="20" height="20" viewBox="0 0 20 20"><path d="M1,7 Q10,-1 19,7 Q10,10 1,7 Z" fill="#8096c8" stroke="#2a3a68" stroke-width="1.5"/><circle cx="10" cy="5.8" r="2.6" fill="#2a3a6a"/><path d="M3,3 L2,1 M7,1.5 L6.5,0 M13,1.5 L13.5,0 M17,3 L18,1" stroke="#3a4a78" stroke-width="0.8"/><path d="M1,15 h8" stroke="#e8e000" stroke-width="2.6"/><path d="M12,12 Q17,9 18,14 Q17,19 12,17" fill="none" stroke="#4a78d0" stroke-width="1.6"/></svg>
<svg class="a" style="left:126px;top:68px" width="20" height="20" viewBox="0 0 20 20"><path d="M1,5 Q10,-2 19,5" fill="none" stroke="#3a4a78" stroke-width="2"/><rect x="2" y="5" width="6" height="14" rx="2" fill="#111"/><rect x="12" y="5" width="6" height="14" rx="2" fill="#111"/><circle cx="5" cy="9" r="2" fill="#f0c000"/><circle cx="5" cy="15" r="2" fill="#10d010"/><circle cx="15" cy="9" r="2" fill="#e01010"/><circle cx="15" cy="15" r="2" fill="#f0c000"/></svg>
<svg class="a" style="left:152px;top:68px" width="20" height="20" viewBox="0 0 20 20"><path d="M1,7 Q10,-1 19,7 Q10,10 1,7 Z" fill="#8096c8" stroke="#2a3a68" stroke-width="1.5"/><circle cx="10" cy="5.8" r="2.6" fill="#2a3a6a"/><path d="M3,3 L2,1 M7,1.5 L6.5,0 M13,1.5 L13.5,0 M17,3 L18,1" stroke="#3a4a78" stroke-width="0.8"/><path d="M3,14 Q5,7 14,9 L14,6 L19,11 L13,14 L14,11 Q8,10 6,14 Z" fill="#3ab030"/><path d="M17,12 Q15,19 6,17 L6,20 L1,15 L7,12 L6,15 Q12,16 14,12 Z" fill="#e0d020"/></svg>
<svg class="a" style="left:178px;top:68px" width="20" height="20" viewBox="0 0 20 20"><path d="M1,7 Q10,-1 19,7 Q10,10 1,7 Z" fill="#8096c8" stroke="#2a3a68" stroke-width="1.5"/><circle cx="10" cy="5.8" r="2.6" fill="#2a3a6a"/><path d="M3,3 L2,1 M7,1.5 L6.5,0 M13,1.5 L13.5,0 M17,3 L18,1" stroke="#3a4a78" stroke-width="0.8"/><path d="M1,12 h8 M5,8 v8" stroke="#7ae05a" stroke-width="2.4"/><path d="M6,19 L12,11" stroke="#333" stroke-width="1.2"/><path d="M11,17 h8" stroke="#e8e000" stroke-width="2.6"/></svg>
<svg class="a" style="left:204px;top:68px" width="20" height="20" viewBox="0 0 20 20"><path d="M1,7 Q10,-1 19,7 Q10,10 1,7 Z" fill="#8096c8" stroke="#2a3a68" stroke-width="1.5"/><circle cx="10" cy="5.8" r="2.6" fill="#2a3a6a"/><path d="M3,3 L2,1 M7,1.5 L6.5,0 M13,1.5 L13.5,0 M17,3 L18,1" stroke="#3a4a78" stroke-width="0.8"/><path d="M5,14 h10 M10,9 v10" stroke="#7ae05a" stroke-width="2.4"/></svg>
<svg class="a" style="left:230px;top:68px" width="20" height="20" viewBox="0 0 20 20"><path d="M1,7 Q10,-1 19,7 Q10,10 1,7 Z" fill="#8096c8" stroke="#2a3a68" stroke-width="1.5"/><circle cx="10" cy="5.8" r="2.6" fill="#2a3a6a"/><path d="M3,3 L2,1 M7,1.5 L6.5,0 M13,1.5 L13.5,0 M17,3 L18,1" stroke="#3a4a78" stroke-width="0.8"/><path d="M6,13 h12" stroke="#e8e000" stroke-width="2.6"/></svg>
<svg class="a" style="left:272px;top:68px" width="20" height="20" viewBox="0 0 20 20"><path d="M3,10 Q3,3 11,3 L11,0.5 L17,5 L11,9 L11,6.5 Q6,6.5 6,10 Z" fill="#5a90e0" stroke="#2a5aa8" stroke-width="0.6"/><path d="M17,10 Q17,17 9,17 L9,19.5 L3,15 L9,11 L9,13.5 Q14,13.5 14,10 Z" fill="#7ab0f0" stroke="#2a5aa8" stroke-width="0.6"/></svg>
<svg class="a" style="left:300px;top:68px" width="20" height="20" viewBox="0 0 20 20"><path d="M5,4 L5,16 A5,2.2 0 0 0 15,16 L15,4" fill="none" stroke="#333" stroke-width="0.9"/><ellipse cx="10" cy="4" rx="5" ry="2.2" fill="none" stroke="#333" stroke-width="0.9"/><path d="M5,13 A5,2.2 0 0 0 15,13" fill="none" stroke="#333" stroke-width="0.7"/></svg>
<svg class="a" style="left:326px;top:68px" width="20" height="20" viewBox="0 0 20 20"><path d="M5,4 L5,16 A5,2.2 0 0 0 15,16 L15,4" fill="none" stroke="#333" stroke-width="0.9"/><ellipse cx="10" cy="4" rx="5" ry="2.2" fill="none" stroke="#333" stroke-width="0.9"/><path d="M5,13 A5,2.2 0 0 0 15,13" fill="none" stroke="#333" stroke-width="0.7"/></svg>
<svg class="a" style="left:352px;top:68px" width="20" height="20" viewBox="0 0 20 20"><path d="M5,4 L5,16 A5,2.2 0 0 0 15,16 L15,4" fill="none" stroke="#333" stroke-width="0.9"/><ellipse cx="10" cy="4" rx="5" ry="2.2" fill="none" stroke="#333" stroke-width="0.9"/><path d="M5,13 A5,2.2 0 0 0 15,13" fill="none" stroke="#333" stroke-width="0.7"/></svg>
<div class="a" style="left:402px;top:66px;width:23px;height:23px;background:#fbe38a;border:1px solid #e8bc50"></div>
<svg class="a" style="left:378px;top:68px" width="20" height="20" viewBox="0 0 20 20"><path d="M5,4 L5,16 A5,2.2 0 0 0 15,16 L15,4" fill="#4a70c0" stroke="#30e0f0" stroke-width="1.2"/><ellipse cx="10" cy="4" rx="5" ry="2.2" fill="#4a70c0" stroke="#30e0f0" stroke-width="1.2"/><ellipse cx="12" cy="17.5" rx="5" ry="1.2" fill="#888" opacity="0.5"/></svg>
<svg class="a" style="left:403px;top:68px" width="20" height="20" viewBox="0 0 20 20"><path d="M5,4 L5,16 A5,2.2 0 0 0 15,16 L15,4" fill="#3a60b0" stroke="#10204a" stroke-width="1.2"/><ellipse cx="10" cy="4" rx="5" ry="2.2" fill="#3a60b0" stroke="#10204a" stroke-width="1.2"/><ellipse cx="10" cy="4" rx="5" ry="2.2" fill="#90b0e8" stroke="#10204a"/></svg>
<svg class="a" style="left:430px;top:68px" width="20" height="20" viewBox="0 0 20 20"><path d="M5,4 L5,16 A5,2.2 0 0 0 15,16 L15,4" fill="#d8e4f4" stroke="#40e8f8" stroke-width="1.2"/><ellipse cx="10" cy="4" rx="5" ry="2.2" fill="#d8e4f4" stroke="#40e8f8" stroke-width="1.2"/></svg>
<svg class="a" style="left:456px;top:68px" width="20" height="20" viewBox="0 0 20 20"><path d="M5,4 L5,16 A5,2.2 0 0 0 15,16 L15,4" fill="#c8d4ec" stroke="#333" stroke-width="1.1"/><ellipse cx="10" cy="4" rx="5" ry="2.2" fill="#c8d4ec" stroke="#333" stroke-width="1.1"/></svg>
<svg class="a" style="left:482px;top:68px" width="20" height="20" viewBox="0 0 20 20"><path d="M5,4 L5,16 A5,2.2 0 0 0 15,16 L15,4" fill="#eee" stroke="#222" stroke-width="1.1"/><ellipse cx="10" cy="4" rx="5" ry="2.2" fill="#eee" stroke="#222" stroke-width="1.1"/><path d="M6,6 L9,16 M9,6 L13,16 M12,6 L8,16 M14,7 L11,16" stroke="#333" stroke-width="0.7"/></svg>
<svg class="a" style="left:507px;top:68px" width="20" height="20" viewBox="0 0 20 20"><path d="M3,3 L3,11 A4,1.6 0 0 0 11,11 L11,3" fill="#e8e8e8" stroke="#444" stroke-width="0.9"/><ellipse cx="7" cy="3" rx="4" ry="1.6" fill="#e8e8e8" stroke="#444" stroke-width="0.9"/><path d="M8.5,9 L8.5,17 A4.5,1.8 0 0 0 17.5,17 L17.5,9" fill="#4a70c0" stroke="#10204a" stroke-width="1"/><ellipse cx="13" cy="9" rx="4.5" ry="1.8" fill="#4a70c0" stroke="#10204a" stroke-width="1"/><path d="M12,1 L17,3 L15,6" fill="none" stroke="#40c030" stroke-width="2"/><path d="M8,19 L3,17 L5,14" fill="none" stroke="#40c030" stroke-width="2"/></svg>
<svg class="a" style="left:534px;top:68px" width="20" height="20" viewBox="0 0 20 20"><path d="M2,4 L2,15 A6,2.2 0 0 0 14,15 L14,4" fill="#4a70c0" stroke="#10204a" stroke-width="1"/><ellipse cx="8" cy="4" rx="6" ry="2.2" fill="#4a70c0" stroke="#10204a" stroke-width="1"/><path d="M12,11 Q12,8 16,8 L16,6.5 L19,9.5 L16,12.5 L16,11 Q14,11 14,12 Z" fill="#5a90e0"/><path d="M18,14 Q18,18 13,18 L13,19.5 L10,16.5 L13,13.5 L13,15 Q16,15 16,14 Z" fill="#5a90e0"/></svg>
<svg class="a" style="left:560px;top:68px" width="20" height="20" viewBox="0 0 20 20"><rect x="1" y="2" width="18" height="16" fill="#7a8aa8" stroke="#3a4a68"/><path d="M4,16 L15,5 M5,5 L15,15" stroke="#e8e8e8" stroke-width="2.4"/><circle cx="15" cy="5" r="2.5" fill="#e8e8e8"/></svg>
<svg class="a" style="left:602px;top:68px" width="20" height="20" viewBox="0 0 20 20"><polygon points="1,4.0 6.0,1 11,4.0 6.0,7.0" fill="#e8e8e8" stroke="#000" stroke-width="1"/><polygon points="1,4.0 6.0,7.0 6.0,11 1,8.0" fill="#aaa" stroke="#000" stroke-width="1"/><polygon points="6.0,7.0 11,4.0 11,8.0 6.0,11" fill="#888" stroke="#000" stroke-width="1"/><polygon points="8,4.0 13.0,1 18,4.0 13.0,7.0" fill="#fff" stroke="#000" stroke-width="1"/><polygon points="8,4.0 13.0,7.0 13.0,11 8,8.0" fill="#ccc" stroke="#000" stroke-width="1"/><polygon points="13.0,7.0 18,4.0 18,8.0 13.0,11" fill="#999" stroke="#000" stroke-width="1"/><path d="M1,15 h8 M5,11 v8" stroke="#7ae05a" stroke-width="2.4"/><path d="M12,12 Q17,9 18,14 Q17,19 12,17" fill="none" stroke="#4a78d0" stroke-width="1.6"/></svg>
<svg class="a" style="left:628px;top:68px" width="20" height="20" viewBox="0 0 20 20"><polygon points="1,4.0 6.0,1 11,4.0 6.0,7.0" fill="#e8e8e8" stroke="#000" stroke-width="1"/><polygon points="1,4.0 6.0,7.0 6.0,11 1,8.0" fill="#aaa" stroke="#000" stroke-width="1"/><polygon points="6.0,7.0 11,4.0 11,8.0 6.0,11" fill="#888" stroke="#000" stroke-width="1"/><polygon points="8,4.0 13.0,1 18,4.0 13.0,7.0" fill="#fff" stroke="#000" stroke-width="1"/><polygon points="8,4.0 13.0,7.0 13.0,11 8,8.0" fill="#ccc" stroke="#000" stroke-width="1"/><polygon points="13.0,7.0 18,4.0 18,8.0 13.0,11" fill="#999" stroke="#000" stroke-width="1"/><rect x="2" y="9" width="5" height="10" rx="2" fill="#111"/><rect x="12" y="9" width="5" height="10" rx="2" fill="#111"/><circle cx="4.5" cy="12" r="1.7" fill="#f0c000"/><circle cx="4.5" cy="16.5" r="1.7" fill="#10d010"/><circle cx="14.5" cy="12" r="1.7" fill="#e01010"/><circle cx="14.5" cy="16.5" r="1.7" fill="#f0c000"/></svg>
<svg class="a" style="left:654px;top:68px" width="20" height="20" viewBox="0 0 20 20"><polygon points="1,4.0 6.0,1 11,4.0 6.0,7.0" fill="#e8e8e8" stroke="#000" stroke-width="1"/><polygon points="1,4.0 6.0,7.0 6.0,11 1,8.0" fill="#aaa" stroke="#000" stroke-width="1"/><polygon points="6.0,7.0 11,4.0 11,8.0 6.0,11" fill="#888" stroke="#000" stroke-width="1"/><polygon points="8,4.0 13.0,1 18,4.0 13.0,7.0" fill="#fff" stroke="#000" stroke-width="1"/><polygon points="8,4.0 13.0,7.0 13.0,11 8,8.0" fill="#ccc" stroke="#000" stroke-width="1"/><polygon points="13.0,7.0 18,4.0 18,8.0 13.0,11" fill="#999" stroke="#000" stroke-width="1"/><path d="M3,14 Q5,8 14,10 L14,7 L19,12 L13,15 L14,12 Q8,11 6,15 Z" fill="#3ab030"/><path d="M17,13 Q15,20 6,18 L6,20 L1,16 L7,13 L6,16 Q12,17 14,13 Z" fill="#e0d020"/></svg>
<svg class="a" style="left:680px;top:68px" width="20" height="20" viewBox="0 0 20 20"><polygon points="1,4.0 6.0,1 11,4.0 6.0,7.0" fill="#e8e8e8" stroke="#000" stroke-width="1"/><polygon points="1,4.0 6.0,7.0 6.0,11 1,8.0" fill="#aaa" stroke="#000" stroke-width="1"/><polygon points="6.0,7.0 11,4.0 11,8.0 6.0,11" fill="#888" stroke="#000" stroke-width="1"/><polygon points="8,4.0 13.0,1 18,4.0 13.0,7.0" fill="#fff" stroke="#000" stroke-width="1"/><polygon points="8,4.0 13.0,7.0 13.0,11 8,8.0" fill="#ccc" stroke="#000" stroke-width="1"/><polygon points="13.0,7.0 18,4.0 18,8.0 13.0,11" fill="#999" stroke="#000" stroke-width="1"/><path d="M1,14 h8 M5,10 v8" stroke="#7ae05a" stroke-width="2.4"/><path d="M6,19 L12,12" stroke="#333" stroke-width="1.2"/><path d="M11,18 h8" stroke="#e8e000" stroke-width="2.6"/></svg>
<svg class="a" style="left:708px;top:68px" width="20" height="20" viewBox="0 0 20 20"><path d="M5,4 L5,16 A5,2.2 0 0 0 15,16 L15,4" fill="#4a70c0" stroke="#10204a" stroke-width="1.1"/><ellipse cx="10" cy="4" rx="5" ry="2.2" fill="#4a70c0" stroke="#10204a" stroke-width="1.1"/><path d="M10,7 v1.5 M10,10 v1.5 M10,13 v1.5" stroke="#fff" stroke-width="1"/></svg>
<svg class="a" style="left:733px;top:68px" width="20" height="20" viewBox="0 0 20 20"><path d="M5,4 L5,16 A5,2.2 0 0 0 15,16 L15,4" fill="#90a8d8" stroke="#10204a" stroke-width="1.1"/><ellipse cx="10" cy="4" rx="5" ry="2.2" fill="#90a8d8" stroke="#10204a" stroke-width="1.1"/><path d="M8.5,6 v11 M11.5,6 v11" stroke="#f0e020" stroke-width="1.3"/></svg>
<svg class="a" style="left:760px;top:68px" width="20" height="20" viewBox="0 0 20 20"><path d="M4,4 L4,16 A5,2.2 0 0 0 14,16 L14,4" fill="#d8e4f4" stroke="#40e8f8" stroke-width="1.2"/><ellipse cx="9" cy="4" rx="5" ry="2.2" fill="#d8e4f4" stroke="#40e8f8" stroke-width="1.2"/><path d="M5,11 L9,15 L17,6" fill="none" stroke="#30b030" stroke-width="2.6"/></svg>
<svg class="a" style="left:785px;top:68px" width="20" height="20" viewBox="0 0 20 20"><path d="M4,5 L4,16 A5,2.2 0 0 0 14,16 L14,5" fill="#d8e4f4" stroke="#40e8f8" stroke-width="1.2"/><ellipse cx="9" cy="5" rx="5" ry="2.2" fill="#d8e4f4" stroke="#40e8f8" stroke-width="1.2"/><rect x="13" y="1" width="5" height="5" fill="none" stroke="#d89020" stroke-width="1.2"/></svg>
<svg class="a" style="left:811px;top:68px" width="20" height="20" viewBox="0 0 20 20"><path d="M5,4 L5,16 A5,2.2 0 0 0 15,16 L15,4" fill="#e8f0fb" stroke="#5a9ae0" stroke-width="1.1"/><ellipse cx="10" cy="4" rx="5" ry="2.2" fill="#e8f0fb" stroke="#5a9ae0" stroke-width="1.1"/><path d="M7,6 L10,16 M11,6 L9,16 M13,7 L11,16" stroke="#5a9ae0" stroke-width="0.7"/></svg>
<svg class="a" style="left:837px;top:68px" width="20" height="20" viewBox="0 0 20 20"><polygon points="2,6 10,2 18,6 10,10" fill="#5a80d0" stroke="#0a1a3a"/><polygon points="2,6 10,10 10,18 3,12" fill="#2a4aa0" stroke="#0a1a3a"/><polygon points="10,10 18,6 17,12 10,18" fill="#1a3070" stroke="#0a1a3a"/></svg>
<svg class="a" style="left:879px;top:68px" width="20" height="20" viewBox="0 0 20 20"><circle cx="8" cy="8" r="5" fill="#cde0f4" stroke="#555" stroke-width="1.4"/><path d="M4.5,11.5 L1,17" stroke="#888" stroke-width="2.4"/><path d="M1,1 h3 M2.5,-0.5 v3 M1,5 h3" stroke="#000" stroke-width="0.8"/><rect x="11" y="11" width="7" height="7" fill="#555"/></svg>
<svg class="a" style="left:905px;top:68px" width="20" height="20" viewBox="0 0 20 20"><circle cx="8" cy="8" r="5" fill="#cde0f4" stroke="#555" stroke-width="1.4"/><path d="M4.5,11.5 L1,17" stroke="#888" stroke-width="2.4"/><rect x="11" y="11" width="7" height="7" fill="#555"/><path d="M1,1 l3,3 M17,1 l-3,3 M1,19 l3,-3" stroke="#30c030" stroke-width="1.8"/></svg>
<svg class="a" style="left:930px;top:68px" width="20" height="20" viewBox="0 0 20 20"><rect x="3" y="4" width="14" height="11" fill="#dde" stroke="#222"/><text x="10" y="13" font-size="8" text-anchor="middle" font-family="Liberation Sans" fill="#000">1:1</text><path d="M1,2 l3,3 M19,2 l-3,3 M1,17 l3,-3 M19,17 l-3,-3" stroke="#30c030" stroke-width="1.8"/></svg>
<svg class="a" style="left:958px;top:68px" width="20" height="20" viewBox="0 0 20 20"><path d="M5,15 L17,3" stroke="#40b040" stroke-width="2"/><path d="M11,3 L17,3 L17,9" fill="none" stroke="#40b040" stroke-width="2"/><circle cx="5" cy="15" r="3" fill="#999" stroke="#444"/></svg>
<svg class="a" style="left:982px;top:68px" width="20" height="20" viewBox="0 0 20 20"><path d="M3,11 A7,7 0 0 1 15,5 L17,3 L17,9 L11,9 L13,7 A5,5 0 0 0 5,11 Z" fill="#30b030" stroke="#1a6a1a" stroke-width="0.6"/><path d="M17,9 A7,7 0 0 1 5,15 L3,17 L3,11 L9,11 L7,13 A5,5 0 0 0 15,9 Z" fill="#30b030" stroke="#1a6a1a" stroke-width="0.6"/></svg>
<svg class="a" style="left:1009px;top:68px" width="20" height="20" viewBox="0 0 20 20"><path d="M2,6 Q10,-1 18,6" fill="#8fa6d8" stroke="#3a4a78" stroke-width="1.5"/><circle cx="10" cy="12" r="6.5" fill="#f8d040" stroke="#c8a020" stroke-width="0.8"/><circle cx="8" cy="10.5" r="0.9" fill="#000"/><circle cx="12" cy="10.5" r="0.9" fill="#000"/><path d="M7,13.5 Q10,16 13,13.5" fill="none" stroke="#000" stroke-width="0.9"/></svg>
<svg class="a" style="left:1052px;top:68px" width="20" height="20" viewBox="0 0 20 20"><polygon points="2,13 10,9 18,13 10,17" fill="#dfe6f4" stroke="#8a9ab8" stroke-width="0.8"/><path d="M6,14 L6,2" stroke="#2a6ae0" stroke-width="1.6"/><path d="M6,14 L15,9" stroke="#30b030" stroke-width="1.6"/><path d="M6,14 L14,18" stroke="#e02020" stroke-width="1.6"/><circle cx="6" cy="14" r="1.6" fill="#666"/></svg>
<svg class="a" style="left:1079px;top:68px" width="20" height="20" viewBox="0 0 20 20"><polygon points="6,6 12,3 18,6 12,9" fill="#dfe6f4" stroke="#8a9ab8" stroke-width="0.8"/><path d="M12,6 L12,0" stroke="#2a6ae0" stroke-width="1.3"/><path d="M12,6 L17,8" stroke="#e02020" stroke-width="1.3"/><path d="M2,17 L9,10 L7,9 L11,8 L10,12 L9,11 L3,18 Z" fill="#40b040" stroke="#206020" stroke-width="0.6"/><rect x="10" y="14" width="8" height="4" fill="#ccc" stroke="#666" stroke-width="0.8"/></svg>
<svg class="a" style="left:1105px;top:68px" width="20" height="20" viewBox="0 0 20 20"><polygon points="8,8 14,4 19,7 13,11" fill="#dfe6f4" stroke="#8a9ab8" stroke-width="0.8"/><path d="M13,7 L13,1" stroke="#2a6ae0" stroke-width="1.3"/><path d="M13,7 L17,10" stroke="#e02020" stroke-width="1.3"/><path d="M2,10 L9,10 L7,13 L2,18 L1,13 Z" fill="#40b040" stroke="#206020" stroke-width="0.6"/></svg>
<svg class="a" style="left:1147px;top:68px" width="20" height="20" viewBox="0 0 20 20"><rect x="1" y="1" width="6" height="6" fill="#20c0f0"/><rect x="7" y="1" width="6" height="6" fill="#f0e020"/><rect x="13" y="1" width="6" height="6" fill="#20d020"/><rect x="1" y="7" width="6" height="6" fill="#f08020"/><rect x="7" y="7" width="6" height="6" fill="#a07020"/><rect x="13" y="7" width="6" height="6" fill="#f020e0"/><rect x="1" y="13" width="6" height="6" fill="#1020e0"/><rect x="7" y="13" width="6" height="6" fill="#20a040"/><rect x="13" y="13" width="6" height="6" fill="#909090"/></svg>
<svg class="a" style="left:1173px;top:68px" width="20" height="20" viewBox="0 0 20 20"><rect x="3" y="1" width="14" height="18" fill="#e8f0fb" stroke="#555"/><rect x="5" y="3" width="10" height="2" fill="#f0c040"/><rect x="5" y="7" width="3" height="3" fill="#20c020"/><rect x="9" y="7" width="3" height="3" fill="#f0e020"/><rect x="5" y="11" width="3" height="3" fill="#e02020"/><rect x="9" y="11" width="3" height="3" fill="#2040e0"/><rect x="5" y="15" width="3" height="3" fill="#f020e0"/><rect x="9" y="15" width="3" height="3" fill="#20c0f0"/></svg>
<svg class="a" style="left:1200px;top:68px" width="20" height="20" viewBox="0 0 20 20"><circle cx="10" cy="10" r="9.5" fill="#5a8a5a"/><circle cx="10" cy="10" r="7.5" fill="#7aa06a"/><path d="M5,15 L15,5 M5,5 L15,15" stroke="#e8e8e8" stroke-width="2.2"/><path d="M5,15 L9,11" stroke="#3a7ae0" stroke-width="2.4"/></svg>
<svg class="a" style="left:1225px;top:68px" width="20" height="20" viewBox="0 0 20 20"><rect x="1" y="1" width="18" height="18" fill="#dde6f4" stroke="#3a5a9a"/><rect x="1" y="1" width="18" height="3" fill="#3a6ac0"/><path d="M5,17 L15,7 M6,7 L16,17" stroke="#555" stroke-width="1.8"/><path d="M4,6 v10" stroke="#c8a040" stroke-width="1" stroke-dasharray="1.5,1.5"/></svg>
<svg class="a" style="left:1251px;top:68px" width="20" height="20" viewBox="0 0 20 20"><rect x="2" y="3" width="16" height="14" fill="none" stroke="#224" stroke-width="1.2" stroke-dasharray="1.5,2"/><path d="M8,11 Q10,5 16,4 L18,7 Q14,10 11,13 Z" fill="#f0c080" stroke="#8a5a20" stroke-width="0.7"/><path d="M4,14 h5 M6.5,11.5 v5" stroke="#3a6ae0" stroke-width="1.5"/></svg>
<svg class="a" style="left:1277px;top:68px" width="20" height="20" viewBox="0 0 20 20"><polygon points="4,3 19,1 16,17 1,19" fill="#3a60c0" stroke="#1a2a70"/><path d="M5,7 L17,5 M4,11 L17,9 M3,15 L16,13 M8,2 L5,18 M12,2 L9,18 M16,1 L13,17" stroke="#e04040" stroke-width="0.8"/></svg><div class="a" style="left:0;top:121px;width:60px;height:3px;background-image:linear-gradient(90deg,#fff 50%,#b8bccb 50%);background-size:4px 3px"></div>
<div class="a" style="left:0;top:374px;width:60px;height:3px;background-image:linear-gradient(90deg,#fff 50%,#b8bccb 50%);background-size:4px 3px"></div>
<svg class="a" style="left:7px;top:133px" width="20" height="20" viewBox="0 0 20 20"><path d="M3,5 L7,5 M2,9 L6,9 M3,13 L6,13" stroke="#aab" stroke-width="1.5"/><circle cx="11" cy="8" r="5.5" fill="#cde0f4" stroke="#7a8aa8" stroke-width="1.6"/><path d="M7,12 L3,18" stroke="#999" stroke-width="2.6"/></svg>
<svg class="a" style="left:34px;top:133px" width="20" height="20" viewBox="0 0 20 20"><path d="M1,2 L18,18 M3,8 L13,18" stroke="#3a7ae0" stroke-width="1.4" stroke-dasharray="3,1.5"/><path d="M17,2 L6,15 L4,18 L7,16 L18,4 Z" fill="#e0a840" stroke="#7a5010" stroke-width="0.8"/><path d="M16,1 L19,4 L18,5 L15,2 Z" fill="#e04040"/><path d="M14,0.5 L20,0.5 L17,3.5 Z" fill="#000"/></svg>
<svg class="a" style="left:7px;top:158px" width="20" height="20" viewBox="0 0 20 20"><rect x="4" y="5" width="12" height="10" fill="#e0eaf8" stroke="#666" stroke-width="1.2"/><path d="M1,1 l3,3 M19,1 l-3,3 M1,19 l3,-3 M19,19 l-3,-3" stroke="#30c030" stroke-width="2"/></svg>
<svg class="a" style="left:34px;top:158px" width="20" height="20" viewBox="0 0 20 20"><path d="M8,3 Q1,4 3,10 Q6,18 13,17 Q18,14 14,10 Q9,8 6,14" fill="none" stroke="#3a6ae0" stroke-width="1.6"/><path d="M17,2 L6,15 L4,18 L7,16 L18,4 Z" fill="#e0a840" stroke="#7a5010" stroke-width="0.8"/><path d="M16,1 L19,4 L18,5 L15,2 Z" fill="#e04040"/><path d="M14,0.5 L20,0.5 L17,3.5 Z" fill="#000"/></svg>
<svg class="a" style="left:7px;top:185px" width="20" height="20" viewBox="0 0 20 20"><path d="M1,2 h3 M2.5,0.5 v3 M1,5 h3" stroke="#000" stroke-width="0.8"/><circle cx="10" cy="9" r="5.5" fill="#cde0f4" stroke="#7a8aa8" stroke-width="1.6"/><path d="M6,13 L2,17" stroke="#999" stroke-width="2.6"/><rect x="11" y="12" width="7" height="7" fill="#555"/><path d="M14,0.5 L20,0.5 L17,3.5 Z" fill="#000"/></svg>
<svg class="a" style="left:34px;top:185px" width="20" height="20" viewBox="0 0 20 20"><rect x="2" y="3" width="14" height="15" fill="none" stroke="#f0e000" stroke-width="1.8"/><path d="M5,10 L9,15 L17,4" fill="none" stroke="#40c040" stroke-width="2.8"/><path d="M14,0.5 L20,0.5 L17,3.5 Z" fill="#000"/></svg>
<svg class="a" style="left:7px;top:210px" width="20" height="20" viewBox="0 0 20 20"><polygon points="1,13 10,8 19,12 10,18" fill="#dfe6f4" stroke="#8a9ab8" stroke-width="0.8"/><path d="M5,14 L5,2" stroke="#2a6ae0" stroke-width="1.8"/><path d="M5,14 L15,8" stroke="#30b030" stroke-width="1.8"/><path d="M5,14 L14,19" stroke="#e02020" stroke-width="1.8"/><circle cx="5" cy="14" r="2" fill="#888"/><path d="M14,0.5 L20,0.5 L17,3.5 Z" fill="#000"/></svg>
<svg class="a" style="left:34px;top:210px" width="20" height="20" viewBox="0 0 20 20"><path d="M3,16 Q1,2 7,3 Q11,6 10,12 Q11,18 16,18 Q19,16 18,11" fill="none" stroke="#3a6ae0" stroke-width="1.6"/><path d="M17,2 L6,15 L4,18 L7,16 L18,4 Z" fill="#e0a840" stroke="#7a5010" stroke-width="0.8"/><path d="M16,1 L19,4 L18,5 L15,2 Z" fill="#e04040"/><path d="M14,0.5 L20,0.5 L17,3.5 Z" fill="#000"/></svg>
<svg class="a" style="left:7px;top:237px" width="20" height="20" viewBox="0 0 20 20"><rect x="2" y="2" width="10" height="2.5" fill="#8aa0f0"/><rect x="2" y="5" width="10" height="2.5" fill="#dde"/><rect x="2" y="8" width="10" height="2.5" fill="#aaa"/><ellipse cx="10" cy="15" rx="7" ry="4" fill="#b07850" stroke="#6a4020" stroke-width="0.8"/><circle cx="7" cy="15.5" r="1.8" fill="#2050e0"/><circle cx="11" cy="15.5" r="1.8" fill="#20b020"/><circle cx="13" cy="12.5" r="1.6" fill="#e02020"/><path d="M18,2 L10,12" stroke="#c08030" stroke-width="1.6"/><path d="M14,0.5 L20,0.5 L17,3.5 Z" fill="#000"/></svg>
<svg class="a" style="left:34px;top:237px" width="20" height="20" viewBox="0 0 20 20"><polygon points="6,3 19,2 14,18 1,18" fill="#a8cdf4" stroke="#2a6ae0" stroke-width="1.4"/><path d="M12,3 L8,18 M4,10 L17,10" stroke="#fff" stroke-width="1.2"/><path d="M14,0.5 L20,0.5 L17,3.5 Z" fill="#000"/></svg>
<svg class="a" style="left:7px;top:263px" width="20" height="20" viewBox="0 0 20 20"><path d="M3,10 Q3,3 11,3 L11,0.5 L17,5 L11,9 L11,6.5 Q6,6.5 6,10 Z" fill="#6a9ae0" stroke="#3a6ab0" stroke-width="0.6"/><path d="M17,10 Q17,17 9,17 L9,19.5 L3,15 L9,11 L9,13.5 Q14,13.5 14,10 Z" fill="#8ab8f0" stroke="#3a6ab0" stroke-width="0.6"/><path d="M14,0.5 L20,0.5 L17,3.5 Z" fill="#000"/></svg>
<svg class="a" style="left:34px;top:263px" width="20" height="20" viewBox="0 0 20 20"><polygon points="2,6.8 10.0,2 18,6.8 10.0,11.6" fill="#e8e8e8" stroke="#333" stroke-width="1"/><polygon points="2,6.8 10.0,11.6 10.0,18 2,13.2" fill="#9a9a9a" stroke="#333" stroke-width="1"/><polygon points="10.0,11.6 18,6.8 18,13.2 10.0,18" fill="#6a6a6a" stroke="#333" stroke-width="1"/><path d="M14,0.5 L20,0.5 L17,3.5 Z" fill="#000"/></svg>
<svg class="a" style="left:7px;top:289px" width="20" height="20" viewBox="0 0 20 20"><path d="M6,7 Q6,2 10,2 Q15,2 15,7 Q15,10 11,12 L11,14" fill="none" stroke="#4a7ac8" stroke-width="2.6"/><circle cx="11" cy="17.5" r="1.6" fill="#4a7ac8"/><ellipse cx="11" cy="18.5" rx="6" ry="1.5" fill="#666" opacity="0.4"/><path d="M14,0.5 L20,0.5 L17,3.5 Z" fill="#000"/></svg>
<svg class="a" style="left:34px;top:289px" width="20" height="20" viewBox="0 0 20 20"><path d="M2,4 v14 M18,4 v14" stroke="#444" stroke-width="1.2"/><path d="M3,7 h14" stroke="#e8e000" stroke-width="2"/><path d="M3,7 l3,-2 v4 Z M17,7 l-3,-2 v4 Z" fill="#e8e000"/><path d="M14,0.5 L20,0.5 L17,3.5 Z" fill="#000"/></svg>
<svg class="a" style="left:7px;top:315px" width="20" height="20" viewBox="0 0 20 20"><path d="M4,4 L16,4 L14,18 L6,18 Z" fill="#b8d8f0" stroke="#5a7a98" stroke-width="1"/><rect x="3" y="3" width="14" height="2" fill="#8ab0d0"/><path d="M8,2 h4 v3 h-4 Z" fill="#f0e020"/><path d="M7,8 L12,14 M12,8 L8,15" stroke="#e0e040" stroke-width="1.3"/><path d="M14,0.5 L20,0.5 L17,3.5 Z" fill="#000"/></svg>
<svg class="a" style="left:34px;top:315px" width="20" height="20" viewBox="0 0 20 20"><path d="M16,17 Q18,7 9,6 L9,2 L2,8 L9,14 L9,10 Q14,10 12,17 Z" fill="#a8a8a8" stroke="#888" stroke-width="0.6"/><path d="M14,0.5 L20,0.5 L17,3.5 Z" fill="#000"/></svg>
<svg class="a" style="left:7px;top:340px" width="20" height="20" viewBox="0 0 20 20"><rect x="1" y="2" width="3" height="16" fill="#667"/><circle cx="11" cy="9" r="6" fill="none" stroke="#8a4a20" stroke-width="1.4"/><path d="M5,9 h12 M11,3 v12 M7,5 l8,8 M15,5 l-8,8" stroke="#8a4a20" stroke-width="1"/><circle cx="11" cy="9" r="1.8" fill="#f0c020"/><path d="M3,16 L17,11 M3,19 L17,14" stroke="#f08020" stroke-width="2"/><path d="M14,0.5 L20,0.5 L17,3.5 Z" fill="#000"/></svg>
<svg class="a" style="left:34px;top:340px" width="20" height="20" viewBox="0 0 20 20"><rect x="5" y="9" width="14" height="10" fill="#fff" stroke="#222" stroke-width="1.1"/><path d="M1,6 L10,4 L13,7 L12,14 L2,15 Z" fill="#f2cc70" stroke="#a88030" stroke-width="0.8"/><path d="M7,6 Q9,2 13,3 L14,1 L15,6 L10,6 Z" fill="#30b030"/></svg><svg class="a" style="left:64px;top:113px" width="24" height="24" viewBox="0 0 24 24"><rect x="0" y="0" width="24" height="24" fill="#80849a" stroke="none"/><rect x="4" y="4" width="16" height="3.5" rx="1" fill="#4a5f8a"/><rect x="4" y="10" width="16" height="3.5" rx="1" fill="#4a5f8a"/><rect x="4" y="16" width="16" height="3.5" rx="1" fill="#4a5f8a"/></svg>
<svg class="a" style="left:92px;top:113px" width="24" height="24" viewBox="0 0 24 24"><rect x="0" y="0" width="24" height="24" fill="#80849a" stroke="none"/><rect x="7" y="7" width="10" height="9" fill="#e0eaf8" stroke="#555" stroke-width="1"/><path d="M3,3 l3,3 M21,3 l-3,3 M3,21 l3,-3 M21,21 l-3,-3" stroke="#30c030" stroke-width="2"/></svg>
<svg class="a" style="left:120px;top:113px" width="24" height="24" viewBox="0 0 24 24"><rect x="0" y="0" width="24" height="24" fill="#80849a" stroke="none"/><path d="M5,8 L9,8 M4,11 L8,11 M5,14 L8,14" stroke="#ccd" stroke-width="1.3"/><circle cx="14" cy="11" r="5" fill="#cde0f4" stroke="#8a9ab8" stroke-width="1.5"/><path d="M10,15 L6,20" stroke="#bbb" stroke-width="2.4"/></svg>
<svg class="a" style="left:148px;top:113px" width="24" height="24" viewBox="0 0 24 24"><rect x="0" y="0" width="24" height="24" fill="#80849a" stroke="none"/><polygon points="2,15 12,10 22,15 12,20" fill="none" stroke="#666" stroke-width="0.7"/><path d="M11,16 L11,4" stroke="#2a6ae0" stroke-width="1.8"/><path d="M11,16 L19,11" stroke="#30c030" stroke-width="1.6"/><path d="M11,16 L19,21" stroke="#e02020" stroke-width="1.8"/><circle cx="11" cy="16" r="1.8" fill="#ccc"/></svg>
<svg class="a" style="left:176px;top:113px" width="24" height="24" viewBox="0 0 24 24"><rect x="0" y="0" width="24" height="24" fill="#80849a" stroke="none"/><path d="M3.2,16.3 L12.3,12.2 L21.7,16.3 M12.3,3.3 L12.3,12.2" fill="none" stroke="#000" stroke-width="1.3"/><polygon points="3.2,6.4 12.3,3.3 21.7,6.4 12.3,10.7" fill="#48d038"/><path d="M3.2,6.4 L12.3,3.3 L21.7,6.4 L21.7,16.3 L12.3,21.4 L3.2,16.3 Z M3.2,6.4 L12.3,10.7 L21.7,6.4 M12.3,10.7 L12.3,21.4" fill="none" stroke="#000" stroke-width="1.3" stroke-linejoin="round"/></svg>
<svg class="a" style="left:204px;top:113px" width="24" height="24" viewBox="0 0 24 24"><rect x="0" y="0" width="24" height="24" fill="#80849a" stroke="none"/><path d="M3.2,16.3 L12.3,12.2 L21.7,16.3 M12.3,3.3 L12.3,12.2" fill="none" stroke="#000" stroke-width="1.3"/><polygon points="3.2,16.3 12.3,12.2 21.7,16.3 12.3,21.4" fill="#48d038"/><path d="M3.2,6.4 L12.3,3.3 L21.7,6.4 L21.7,16.3 L12.3,21.4 L3.2,16.3 Z M3.2,6.4 L12.3,10.7 L21.7,6.4 M12.3,10.7 L12.3,21.4" fill="none" stroke="#000" stroke-width="1.3" stroke-linejoin="round"/></svg>
<svg class="a" style="left:232px;top:113px" width="24" height="24" viewBox="0 0 24 24"><rect x="0" y="0" width="24" height="24" fill="#80849a" stroke="none"/><path d="M3.2,16.3 L12.3,12.2 L21.7,16.3 M12.3,3.3 L12.3,12.2" fill="none" stroke="#000" stroke-width="1.3"/><polygon points="3.2,6.4 12.3,3.3 12.3,12.2 3.2,16.3" fill="#48d038"/><path d="M3.2,6.4 L12.3,3.3 L21.7,6.4 L21.7,16.3 L12.3,21.4 L3.2,16.3 Z M3.2,6.4 L12.3,10.7 L21.7,6.4 M12.3,10.7 L12.3,21.4" fill="none" stroke="#000" stroke-width="1.3" stroke-linejoin="round"/></svg>
<svg class="a" style="left:260px;top:113px" width="24" height="24" viewBox="0 0 24 24"><rect x="0" y="0" width="24" height="24" fill="#80849a" stroke="none"/><path d="M3.2,16.3 L12.3,12.2 L21.7,16.3 M12.3,3.3 L12.3,12.2" fill="none" stroke="#000" stroke-width="1.3"/><polygon points="12.3,10.7 21.7,6.4 21.7,16.3 12.3,21.4" fill="#48d038"/><path d="M3.2,6.4 L12.3,3.3 L21.7,6.4 L21.7,16.3 L12.3,21.4 L3.2,16.3 Z M3.2,6.4 L12.3,10.7 L21.7,6.4 M12.3,10.7 L12.3,21.4" fill="none" stroke="#000" stroke-width="1.3" stroke-linejoin="round"/></svg>
<svg class="a" style="left:288px;top:113px" width="24" height="24" viewBox="0 0 24 24"><rect x="0" y="0" width="24" height="24" fill="#80849a" stroke="none"/><path d="M3.2,16.3 L12.3,12.2 L21.7,16.3 M12.3,3.3 L12.3,12.2" fill="none" stroke="#000" stroke-width="1.3"/><polygon points="3.2,6.4 12.3,10.7 12.3,21.4 3.2,16.3" fill="#48d038"/><path d="M3.2,6.4 L12.3,3.3 L21.7,6.4 L21.7,16.3 L12.3,21.4 L3.2,16.3 Z M3.2,6.4 L12.3,10.7 L21.7,6.4 M12.3,10.7 L12.3,21.4" fill="none" stroke="#000" stroke-width="1.3" stroke-linejoin="round"/></svg>
<svg class="a" style="left:316px;top:113px" width="24" height="24" viewBox="0 0 24 24"><rect x="0" y="0" width="24" height="24" fill="#80849a" stroke="none"/><path d="M3.2,16.3 L12.3,12.2 L21.7,16.3 M12.3,3.3 L12.3,12.2" fill="none" stroke="#000" stroke-width="1.3"/><polygon points="12.3,3.3 21.7,6.4 21.7,16.3 12.3,12.2" fill="#48d038"/><path d="M3.2,6.4 L12.3,3.3 L21.7,6.4 L21.7,16.3 L12.3,21.4 L3.2,16.3 Z M3.2,6.4 L12.3,10.7 L21.7,6.4 M12.3,10.7 L12.3,21.4" fill="none" stroke="#000" stroke-width="1.3" stroke-linejoin="round"/></svg>
<svg class="a" style="left:344px;top:113px" width="24" height="24" viewBox="0 0 24 24"><rect x="0" y="0" width="24" height="24" fill="#80849a" stroke="none"/><polygon points="3.2,6.4 12.3,3.3 21.7,6.4 12.3,10.7" fill="#70e060"/><polygon points="3.2,6.4 12.3,10.7 12.3,21.4 3.2,16.3" fill="#48c838"/><polygon points="12.3,10.7 21.7,6.4 21.7,16.3 12.3,21.4" fill="#30a828"/></svg>
<svg class="a" style="left:64px;top:141px" width="24" height="24" viewBox="0 0 24 24"><rect x="0" y="0" width="24" height="24" fill="#80849a" stroke="none"/><path d="M7,6 L7,18 A5,2.2 0 0 0 17,18 L17,6" fill="none" stroke="#111" stroke-width="1.1"/><ellipse cx="12" cy="6" rx="5" ry="2.2" fill="none" stroke="#111" stroke-width="1.1"/></svg>
<svg class="a" style="left:64px;top:169px" width="24" height="24" viewBox="0 0 24 24"><rect x="0" y="0" width="24" height="24" fill="#80849a" stroke="none"/><path d="M7,6 L7,18 A5,2.2 0 0 0 17,18 L17,6" fill="none" stroke="#111" stroke-width="1.1"/><ellipse cx="12" cy="6" rx="5" ry="2.2" fill="none" stroke="#111" stroke-width="1.1"/></svg>
<svg class="a" style="left:64px;top:197px" width="24" height="24" viewBox="0 0 24 24"><rect x="0.75" y="0.75" width="22.5" height="22.5" fill="#8a8262" stroke="#f0c860" stroke-width="1.5"/><path d="M7,6 L7,18 A5,2.2 0 0 0 17,18 L17,6" fill="#5a8ae0" stroke="#10204a" stroke-width="1.1"/><ellipse cx="12" cy="6" rx="5" ry="2.2" fill="#5a8ae0" stroke="#10204a" stroke-width="1.1"/><ellipse cx="12" cy="6" rx="5" ry="2.2" fill="#4a70c0" stroke="#10204a"/></svg>
<svg class="a" style="left:64px;top:225px" width="24" height="24" viewBox="0 0 24 24"><rect x="0" y="0" width="24" height="24" fill="#80849a" stroke="none"/><path d="M7,6 L7,18 A5,2.2 0 0 0 17,18 L17,6" fill="#d8e0f0" stroke="#222" stroke-width="1.1"/><ellipse cx="12" cy="6" rx="5" ry="2.2" fill="#d8e0f0" stroke="#222" stroke-width="1.1"/></svg>
<svg class="a" style="left:64px;top:253px" width="24" height="24" viewBox="0 0 24 24"><rect x="0" y="0" width="24" height="24" fill="#80849a" stroke="none"/><path d="M7,6 L7,18 A5,2.2 0 0 0 17,18 L17,6" fill="none" stroke="#111" stroke-width="1.1"/><ellipse cx="12" cy="6" rx="5" ry="2.2" fill="none" stroke="#111" stroke-width="1.1"/><path d="M9,8 L11,18 M12,8 L10,18 M14,9 L13,18" stroke="#111" stroke-width="0.7"/></svg><svg class="a" style="left:100px;top:865px" width="70" height="100" viewBox="0 0 70 100">
<polygon points="21,56 38.3,46.5 38.3,66.4" fill="#8a9ab8" fill-opacity="0.35" stroke="#d8d8d8" stroke-width="0.9"/>
<path d="M38.3,66.4 L38.3,85" stroke="#d8d8d8" stroke-width="0.9"/>
<polygon points="19.9,76.9 38.3,66.4 55.1,76.9 38.3,85.3" fill="#8a9a60" fill-opacity="0.75" stroke="#f0f000" stroke-width="1"/>
<path d="M19.9,76 L19.9,25" stroke="#10a0a8" stroke-width="1.6"/><path d="M15.8,26 L19.9,15.5 L24,26 Z" fill="#10d8e0"/>
<path d="M19.9,76.9 L48,60.5" stroke="#10b010" stroke-width="2.2"/><path d="M45,56 L55.5,56 L49,64.5 Z" fill="#10c010"/>
<path d="M19.9,76.9 L38,86.5" stroke="#e01010" stroke-width="2.6"/><path d="M35,82 L44.8,90.8 L34.5,90 Z" fill="#f01010"/>
<circle cx="19.9" cy="76.9" r="3.6" fill="#707070"/>
<path d="M15.5,5.5 h7.5 l-7.5,8.5 h7.5" fill="none" stroke="#d8d8d8" stroke-width="1"/>
<path d="M56,50 l3.3,4.5 l3.3,-4.5 M59.3,54.5 v4.5" fill="none" stroke="#e01010" stroke-width="1"/>
<path d="M45,89.5 l8,8 M53,89.5 l-8,8" stroke="#d8d8d8" stroke-width="1"/></svg>
<svg class="a" style="left:1730px;top:860px" width="190" height="90" viewBox="0 0 190 90">
<defs><linearGradient id="dg" x1="0" y1="0" x2="0" y2="1"><stop offset="0" stop-color="#c8e4f4"/><stop offset="0.12" stop-color="#1a88c8"/><stop offset="0.88" stop-color="#1a88c8"/><stop offset="1" stop-color="#c8e4f4"/></linearGradient></defs>
<rect x="21.5" y="6.8" width="156.5" height="70.4" rx="11" fill="url(#dg)"/>
<rect x="5.5" y="12.8" width="170" height="58" rx="9" fill="#fff" stroke="#0a7ac0" stroke-width="2"/>
<text x="17" y="38.8" font-size="25" font-weight="bold" font-family="Liberation Sans" fill="#000">A</text>
<path d="M54,23 A9,9 0 1 1 47,37.5 A7.5,7.5 0 0 0 54,23 Z" fill="#000"/>
<path d="M46,52 h19 v5 h-5 v8.6 h-9 v-8.6 h-5 Z" fill="#000"/>
<path d="M20.5,60 l-1,4" stroke="#000" stroke-width="1.8"/><circle cx="33" cy="64.5" r="1.1" fill="#000"/>
<path d="M135,50 Q150,36 165,42 Q178,52 174,70 Q168,82 150,81 Q132,80 130,70 Z" fill="#0a9ae0"/>
<path d="M166,57 Q180,55 190,68 Q188,78 170,76 Q162,72 166,57 Z" fill="#fff" stroke="#888" stroke-width="0.6"/>
<circle cx="167.5" cy="35" r="5" fill="#e00020"/>
<circle cx="116" cy="39.4" r="31.5" fill="#0a9ae0" stroke="#333" stroke-width="0.6"/>
<ellipse cx="107" cy="40" rx="28" ry="23" fill="#f8f8f8" stroke="#666" stroke-width="0.6"/>
<path d="M86,46 Q105,66 130,52" fill="none" stroke="#555" stroke-width="0.8"/>
<path d="M82,32 L100,37 M81,38 L98,40 M117,46 L134,44 M116,50 L132,55 M112,50 L126,61" stroke="#777" stroke-width="0.6"/>
<ellipse cx="109.5" cy="17" rx="8" ry="7.5" fill="#fff" stroke="#666" stroke-width="0.6"/>
<ellipse cx="122" cy="24" rx="7.7" ry="9" fill="#fff" stroke="#666" stroke-width="0.6"/>
<path d="M103,19 Q107,23 111,20" fill="none" stroke="#000" stroke-width="1.2"/>
<ellipse cx="118.5" cy="23.5" rx="1.8" ry="2.8" fill="#000"/>
<circle cx="108.7" cy="27.3" r="4.5" fill="#e00020"/><circle cx="107.5" cy="26.2" r="1.3" fill="#fff"/>
<path d="M100,70 Q125,72 142,58" fill="none" stroke="#d02020" stroke-width="2"/>
<ellipse cx="91" cy="65.5" rx="10" ry="7.5" fill="#0a9ae0"/>
<ellipse cx="86.5" cy="54.5" rx="6.5" ry="6.5" fill="#f8f8f8" stroke="#666" stroke-width="0.5"/>
<ellipse cx="122.3" cy="66.5" rx="8.3" ry="7.5" fill="#f8f8f8" stroke="#666" stroke-width="0.5"/>
<circle cx="107.5" cy="72.4" r="5" fill="#e8d020" stroke="#7a6010" stroke-width="0.6"/>
</svg><!--/ICONS-->

</body></html>
